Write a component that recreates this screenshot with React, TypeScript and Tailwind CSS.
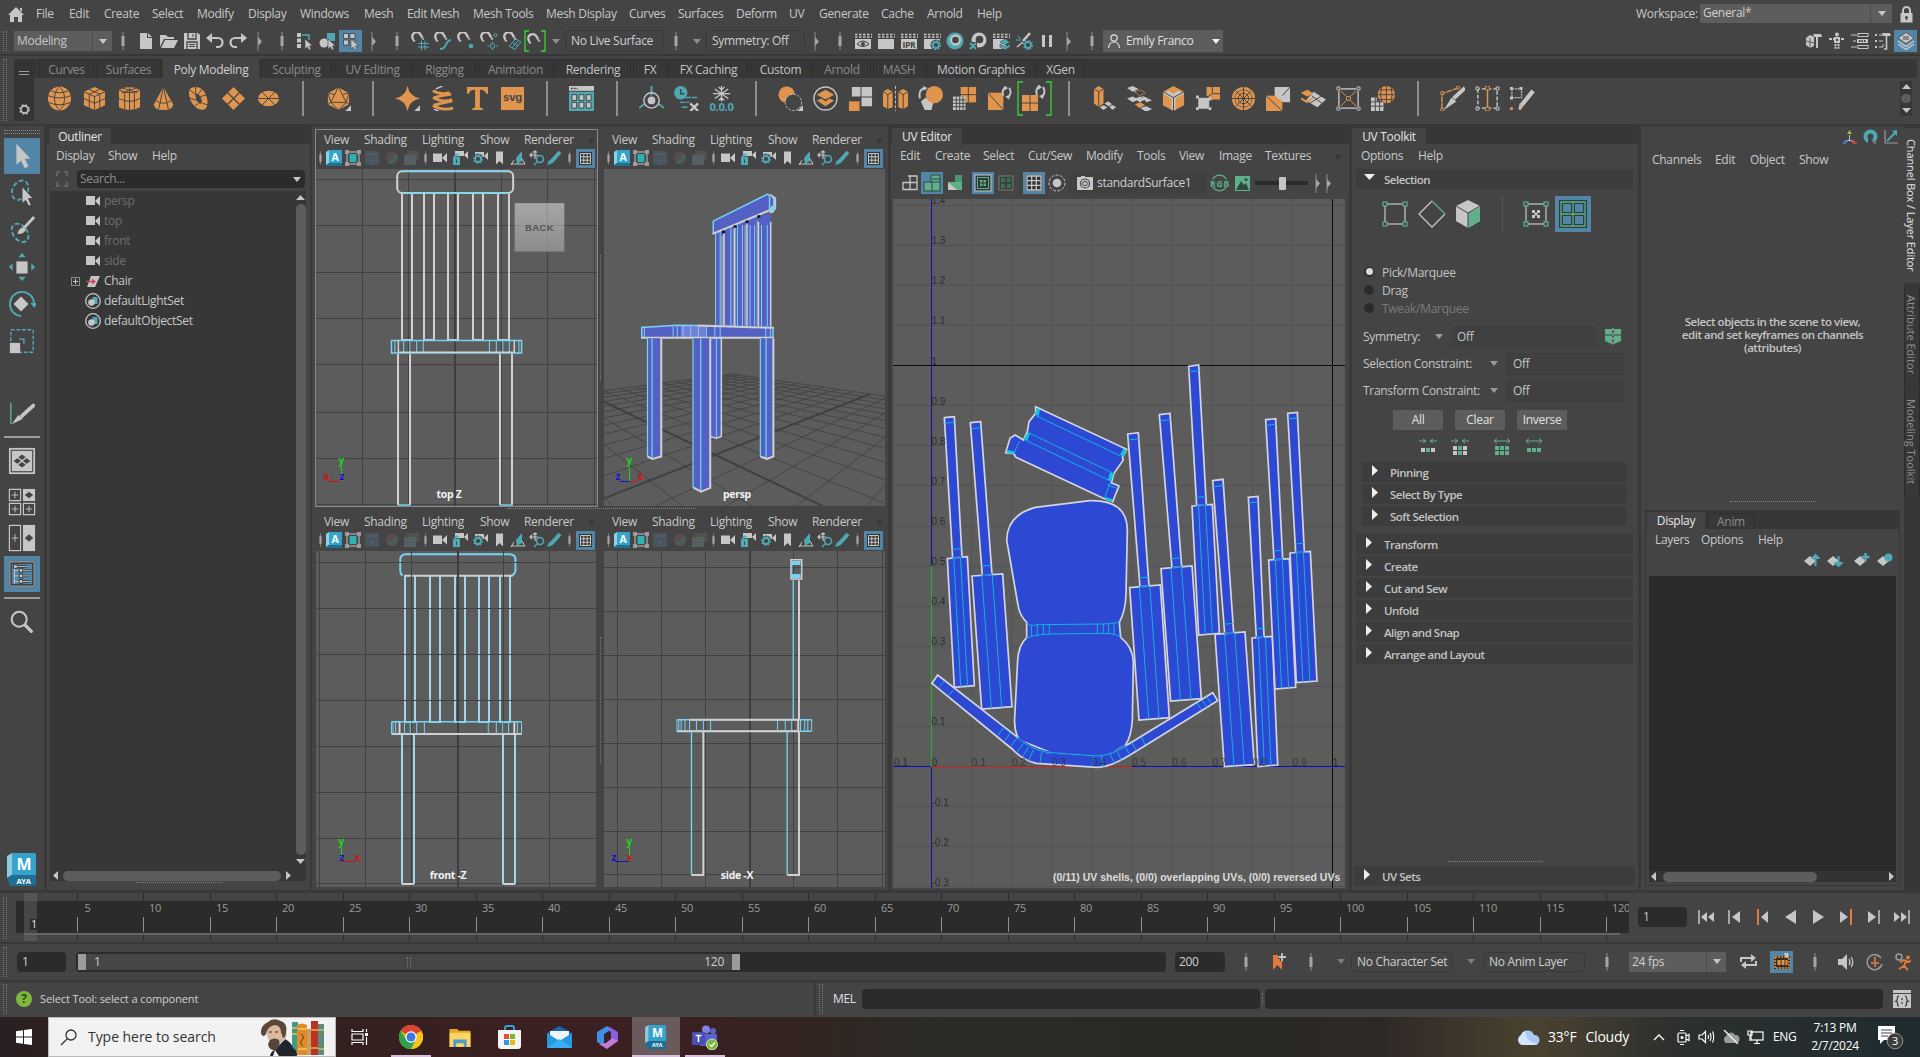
import type { ReactNode } from 'react';

const G = '#c6c6c6';
const T = '#4fa9b5';
const O = '#e0954f';
const E = '#5db08a';
const K = '#444444';

/* ---------- shared pieces ---------- */

function I({ c = 'w-[18px] h-[18px]', vb = '0 0 18 18', children }: { c?: string; vb?: string; children: ReactNode }) {
  return (
    <svg className={`${c} shrink-0 block`} viewBox={vb} fill="none" stroke="none">
      {children}
    </svg>
  );
}

function Cell({ w = 'w-[23px]', on = false, children }: { w?: string; on?: boolean; children?: ReactNode }) {
  return (
    <div className={`${w} h-[22px] shrink-0 flex items-center justify-center ${on ? 'bg-[#5285a6]' : ''}`}>{children}</div>
  );
}

const Sep = ({ w = 'w-[22px]' }: { w?: string }) => (
  <Cell w={w}>
    <I c="w-[4px] h-[18px]" vb="0 0 4 18"><path d="M2 0V18" stroke="#8d8d8d" /><path d="M2 4V14" stroke="#a6a6a6" strokeWidth="3" /></I>
  </Cell>
);
const Handle = ({ w = 'w-[22px]' }: { w?: string }) => (
  <Cell w={w}>
    <I c="w-[6px] h-[19px]" vb="0 0 6 19"><path d="M1 0V19" stroke="#8d8d8d" /><path d="M1 5L5 9.500L1 14Z" fill="#a6a6a6" /></I>
  </Cell>
);
const Down = ({ w = 'w-[18px]', f = '#9b9b9b' }: { w?: string; f?: string }) => (
  <Cell w={w}><I c="w-[8px] h-[5px]" vb="0 0 8 5"><path d="M0 0H8L4 5Z" fill={f} /></I></Cell>
);
const DotsV = ({ c }: { c: string }) => <div className={`${c} border-l border-dotted border-[#7a7a7a] shrink-0`} />;
const DotsH = ({ c }: { c: string }) => <div className={`${c} border-t border-dotted border-[#858585] shrink-0`} />;

type Item = [string, string];
function Menu({ items, c = '' }: { items: Item[]; c?: string }) {
  return (
    <div className={`flex items-center text-[#c8c8c8] ${c}`}>
      {items.map(([t, w]) => <span key={t} className={`${w} shrink-0`}>{t}</span>)}
    </div>
  );
}

/* ---------- menu bar ---------- */

const mainMenu: Item[] = [
  ['File', 'w-[33px]'], ['Edit', 'w-[35px]'], ['Create', 'w-[48px]'], ['Select', 'w-[45px]'], ['Modify', 'w-[51px]'],
  ['Display', 'w-[52px]'], ['Windows', 'w-[64px]'], ['Mesh', 'w-[43px]'], ['Edit Mesh', 'w-[66px]'], ['Mesh Tools', 'w-[73px]'],
  ['Mesh Display', 'w-[83px]'], ['Curves', 'w-[49px]'], ['Surfaces', 'w-[58px]'], ['Deform', 'w-[53px]'], ['UV', 'w-[30px]'],
  ['Generate', 'w-[62px]'], ['Cache', 'w-[46px]'], ['Arnold', 'w-[50px]'], ['Help', 'w-[40px]'],
];

function MenuBar() {
  return (
    <div className="h-[28px] flex items-center shrink-0">
      <div className="w-[36px] pl-[8px]">
        <I c="w-[16px] h-[15px]" vb="0 0 16 15"><path d="M8 0L16 8H14V15H10V10H6V15H2V8H0Z" fill={G} /><path d="M12 1h2v4l-2-2z" fill={G} /></I>
      </div>
      <Menu items={mainMenu} />
      <div className="flex-1" />
      <span className="w-[64px] text-[#c8c8c8]">Workspace:</span>
      <div className="w-[192px] h-[19px] mb-[2px] bg-[#5d5d5d] flex items-center">
        <span className="flex-1 pl-[3px] text-[#d0d0d0]">General*</span>
        <div className="w-px h-full bg-[#4c4c4c]" />
        <Down w="w-[21px]" f="#c6c6c6" />
      </div>
      <div className="w-[28px] pl-[8px]">
        <I c="w-[13px] h-[17px]" vb="0 0 13 17"><path d="M3 8V4.500a3.500 3.500 0 0 1 7 0V8" stroke={G} strokeWidth="2" /><rect x="0.500" y="7" width="12" height="9.500" fill={G} /><path d="M6.500 10v4M5 11.500h3" stroke={K} strokeWidth="1.300" /></I>
      </div>
    </div>
  );
}

/* ---------- status line ---------- */

const Magnet = () => (
  <g>
    <path d="M3.500 9.500L1.800 6.500A4.300 4.300 0 0 1 9.500 2.500L12.500 7.500" stroke={G} strokeWidth="2.400" />
    <path d="M2.800 8L5 6.800M10.500 6.500L12.700 5.300" stroke={K} strokeWidth="0.900" />
  </g>
);
const cursor = <path d="M9 7L9 17L11.300 15L13 18L15 17L13.400 14L16.500 13.700Z" fill={G} stroke={K} strokeWidth="0.600" />;
const clap = <path d="M1 2.500H18M1 5H18" stroke={G} strokeWidth="1.500" strokeDasharray="2.500 1.500" />;
const gear = (x: number, y: number, col: string) => (
  <g><circle cx={x} cy={y} r="3" stroke={col} strokeWidth="1.800" /><circle cx={x} cy={y} r="4.400" stroke={col} strokeWidth="1.300" strokeDasharray="1.700 1.700" /></g>
);

function StatusLine() {
  return (
    <div className="h-[26px] flex items-center shrink-0">
      <div className="w-[14px] flex gap-[2px] pl-[3px]"><DotsV c="h-[20px]" /><DotsV c="h-[20px]" /></div>
      <div className="w-[98px] h-[20px] bg-[#5d5d5d] flex items-center">
        <span className="flex-1 pl-[3px] text-[#c8c8c8]">Modeling</span>
        <div className="w-px h-full bg-[#4c4c4c]" />
        <Down w="w-[19px]" f="#c6c6c6" />
      </div>
      <Sep w="w-[22px]" />
      <Cell><I><path d="M3 1H10V6H15V17H3Z" fill={G} /><path d="M11 1L15 5H11Z" fill={G} /></I></Cell>
      <Cell><I><path d="M0 15V3H6L8 5H14V7H4Z" fill={G} /><path d="M5 8H18L14 16H1Z" fill={G} /></I></Cell>
      <Cell><I><path d="M1 1H15L17 3V17H1Z" fill={G} /><path d="M5 1V7H13V1M4 17V10H14V17" stroke={K} strokeWidth="1.300" /><path d="M10 2v3M6 12.500H12M6 14.500H12" stroke={K} /></I></Cell>
      <Cell><I><path d="M5 6H12A4.500 4.500 0 0 1 12 15H10" stroke={G} strokeWidth="2.200" /><path d="M0 6L6 1V11Z" fill={G} /></I></Cell>
      <Cell><I><path d="M13 6H6A4.500 4.500 0 0 0 6 15H8" stroke={G} strokeWidth="2.200" /><path d="M18 6L12 1V11Z" fill={G} /></I></Cell>
      <Handle w="w-[21px]" />
      <Sep w="w-[23px]" />
      <Cell><I><path d="M1 1h4v4H1zM1 6.500h4v4H1zM1 12h4v4H1z" fill={G} /><path d="M6 3H13V8" stroke={T} strokeWidth="1.500" />{cursor}</I></Cell>
      <Cell><I><circle cx="5" cy="11" r="4.500" fill={G} /><rect x="8" y="1" width="8" height="8" fill={T} />{cursor}</I></Cell>
      <Cell on><I><path d="M1.500 1.500h5v5h-5zM8 1.500h5v5H8zM1.500 8h5v5h-5zM8 8h5v5H8z" fill={G} stroke="#333" strokeWidth="0.700" />{cursor}</I></Cell>
      <Handle w="w-[24px]" />
      <Sep />
      <Cell><I><Magnet /><path d="M7 11.500H18M7 15H18M10.500 8.500V18M14 8.500V18" stroke={T} /></I></Cell>
      <Cell><I><Magnet /><path d="M6 17C14 17 10 9 17 8" stroke={T} strokeWidth="2" /></I></Cell>
      <Cell><I><Magnet /><circle cx="14" cy="14" r="2.300" fill={T} /></I></Cell>
      <Cell><I><Magnet /><circle cx="12.500" cy="14" r="2.300" stroke={T} /><circle cx="15.500" cy="3" r="1.500" stroke={T} /><path d="M12.500 10V11M12.500 17V18M7.500 14H9M16 14H17.500" stroke={T} /></I></Cell>
      <Cell><I><Magnet /><path d="M13 7L18 10L12 17.500L6 14ZM9.500 10.500L15 14M9 16L15 9" stroke={T} /></I></Cell>
      <Cell><I c="w-[22px] h-[22px]" vb="0 0 22 22"><path d="M5 1H1V21H5M17 1H21V21H17" stroke="#35d62c" strokeWidth="1.300" /><g transform="translate(3 4)"><Magnet /></g></I></Cell>
      <Down w="w-[19px]" f="#8d8d8d" />
      <div className="w-[99px] h-[22px] border border-[#3c3c3c] rounded-sm flex items-center pl-[5px] text-[#d0d0d0] shrink-0">No Live Surface</div>
      <Sep w="w-[24px]" />
      <Down f="#8d8d8d" />
      <div className="w-[99px] h-[22px] border border-[#3c3c3c] rounded-sm flex items-center pl-[5px] text-[#d0d0d0] shrink-0">Symmetry: Off</div>
      <Handle w="w-[24px]" />
      <Sep />
      <Cell><I>{clap}<rect x="1" y="7" width="16" height="10" fill={G} /><path d="M3 12Q9 6 15 12Q9 17 3 12Z" stroke={K} /><circle cx="9" cy="12" r="2" fill={K} /></I></Cell>
      <Cell><I>{clap}<rect x="1" y="7" width="16" height="10" fill={G} /></I></Cell>
      <Cell><I>{clap}<rect x="1" y="7" width="16" height="10" fill={G} /><text x="2.500" y="15.500" fontSize="8.500" fontWeight="bold" fill={K}>IPR</text></I></Cell>
      <Cell><I>{clap}<path d="M1 7H17V9L9 17H1Z" fill={G} /><circle cx="13" cy="13" r="5.500" fill={K} />{gear(13, 13, T)}</I></Cell>
      <Cell><I><circle cx="9" cy="9" r="8.500" fill={T} /><circle cx="9.500" cy="8" r="5.500" fill={G} /><circle cx="9.500" cy="8" r="3.300" fill={K} /></I></Cell>
      <Cell><I><circle cx="10" cy="8" r="7.500" fill={G} /><circle cx="10.500" cy="7.500" r="3.800" fill={K} /><path d="M0 10H8V18H0Z" fill={K} /><path d="M1 11L7 17M7 11L1 17" stroke={T} strokeWidth="2" /></I></Cell>
      <Cell><I>{clap}<rect x="1" y="7" width="13" height="10" fill={G} /><path d="M13 7L18 10L13 13L8 10ZM8 12L13 15L18 12V15L13 18L8 15Z" fill={T} stroke={K} strokeWidth="0.600" /></I></Cell>
      <Cell><I><path d="M1 8H6M3 4L6 7" stroke={T} /><path d="M8 9L15 1" stroke={G} strokeWidth="2.500" /><path d="M2 15L8 10" stroke={G} strokeWidth="1.500" />{gear(13, 13, T)}</I></Cell>
      <Cell><I><path d="M5.500 3V15M12.500 3V15" stroke={G} strokeWidth="3" /></I></Cell>
      <Handle />
      <Sep w="w-[23px]" />
      <div className="w-[120px] h-[22px] bg-[#5d5d5d] flex items-center shrink-0">
        <I c="w-[14px] h-[15px] ml-[4px]" vb="0 0 14 15"><circle cx="7" cy="4" r="3.200" stroke="#e0e0e0" strokeWidth="1.200" /><path d="M1.500 14C2 9 5 8 7 8S12 9 12.500 14" stroke="#e0e0e0" strokeWidth="1.200" /></I>
        <span className="flex-1 pl-[5px] text-[#e0e0e0]">Emily Franco</span>
        <Down w="w-[15px]" f="#f0f0f0" />
      </div>
      <div className="flex-1" />
      <Cell><I><path d="M1 6L5 3L9 5V14L5 16L1 13Z" fill={G} /><path d="M1 9L9 11M5 6V16" stroke={K} strokeWidth="0.800" /><path d="M8 2H16L17 5H9Z" fill={G} /><path d="M12 4V16" stroke={G} strokeWidth="2" /></I></Cell>
      <Cell><I><circle cx="9" cy="2.500" r="2" fill={G} /><path d="M1 7H17" stroke={G} strokeWidth="2" strokeDasharray="3 1" /><rect x="6" y="5" width="6" height="6" fill={G} /><rect x="8" y="7" width="2" height="2" fill={K} /><path d="M7.500 12V17M10.500 12V17" stroke={G} strokeWidth="2" strokeDasharray="2 .8" /></I></Cell>
      <Cell><I><path d="M0 3H6M2 9H5M0 15H6" stroke={G} /><rect x="7" y="1.500" width="10" height="3" stroke={G} /><rect x="6" y="7" width="11" height="4" fill={G} /><path d="M8 9H15" stroke={K} strokeDasharray="1.500 1" strokeWidth="2" /><rect x="7" y="13.500" width="10" height="3" stroke={G} /></I></Cell>
      <Cell><I><path d="M1 3H3M1 9H3M1 15H3" stroke={G} strokeWidth="2" /><path d="M5 3H9M5 9H9M5 15H9V12" stroke={G} /><path d="M8 1H16L17 4H9Z" fill={G} /><path d="M12.500 4V17H10" stroke={G} strokeWidth="1.600" /></I></Cell>
      <Cell on><I><path d="M9 0.500L17 6L9 11.500L1 6Z" fill={G} stroke="#333" strokeWidth="0.600" /><path d="M1 9L9 14.500L17 9M1 12L9 17.500L17 12" stroke={G} strokeWidth="1.500" /><path d="M6 5H12M6 7H12" stroke="#444" /></I></Cell>
      <div className="w-[3px]" />
    </div>
  );
}

/* ---------- shelf ---------- */

const shelfTabs: [string, string, 0 | 1 | 2][] = [
  ['Curves', 'w-[57px]', 0], ['Surfaces', 'w-[67px]', 0], ['Poly Modeling', 'w-[98px]', 2], ['Sculpting', 'w-[73px]', 0],
  ['UV Editing', 'w-[79px]', 0], ['Rigging', 'w-[65px]', 0], ['Animation', 'w-[77px]', 0], ['Rendering', 'w-[78px]', 1],
  ['FX', 'w-[36px]', 1], ['FX Caching', 'w-[81px]', 1], ['Custom', 'w-[63px]', 1], ['Arnold', 'w-[60px]', 0],
  ['MASH', 'w-[54px]', 0], ['Motion Graphics', 'w-[110px]', 1], ['XGen', 'w-[49px]', 1],
];
const tri = <path d="M26 20V26H20Z" fill={G} />;
const spin = (x: number) => <g transform={`translate(${x} 0)`}><path d="M5 10A5 6 0 0 1 8 1M11 2A5 6 0 0 1 9 12" stroke={G} strokeWidth="2" /><path d="M6 0L10 2L6 5ZM12 9L7 11L11 14Z" fill={G} /></g>;

const shelf: ReactNode[] = [
  <><ellipse cx="13" cy="13" rx="12" ry="12.500" fill={O} /><path d="M1 10Q13 15 25 10M1 17Q13 22 25 17M13 1C6 6 6 20 13 25M13 1C20 6 20 20 13 25M4 5Q13 9 22 5" stroke={K} /></>,
  <><path d="M13 1L24 6V20L13 25L2 20V6Z" fill={O} /><path d="M2 6L13 11L24 6M13 11V25M2 13L13 18L24 13M7.500 8.500V22.500M18.500 8.500V22.500M7.500 3.500L18.500 8.500M18.500 3.500L7.500 8.500" stroke={K} /></>,
  <><path d="M2 4Q13 -2 24 4V22Q13 28 2 22Z" fill={O} /><path d="M2 4Q13 10 24 4M2 13Q13 19 24 13M13 1V25M5 2L21 7M21 2L5 7M8 7V24M18 7V24" stroke={K} /></>,
  <><path d="M13 1L23 19Q23 25 13 25Q3 25 3 19Z" fill={O} /><path d="M13 1L8 24M13 1L18 24M5 15Q13 21 21 15" stroke={K} /></>,
  <><path fillRule="evenodd" d="M10 1C20 0 26 18 20 24C10 28 0 12 4 3Q6 1 10 1ZM10 8C9 13 13 20 16 18C18 15 14 7 10 8Z" fill={O} /><path d="M10 1L10 8M4 4L10 9M3 12L11 15M9 21L13 18M24 20L17 18M22 9L15 11M17 3L13 8" stroke={K} /></>,
  <><path d="M13 1L25 13L13 25L1 13Z" fill={O} /><path d="M7 7L19 19M19 7L7 19" stroke={K} strokeWidth="1.300" /></>,
  <><ellipse cx="13" cy="13" rx="11" ry="8" fill={O} /><path d="M1 13H25M6 6L20 20M20 6L6 20" stroke={K} /></>,
  'sep',
  <><path d="M13 1L24 7V19L13 25L2 19V7Z" fill={O} /><path d="M13 1L5 17H21ZM2 7L13 1L24 7M5 17L13 25L21 17M2 7L5 17L2 19M24 7L21 17L24 19M9 9L2 7M17 9L24 7" stroke={K} />{tri}</>,
  'sep',
  <><path d="M13 0Q15 11 26 13Q15 15 13 26Q11 15 0 13Q11 11 13 0Z" fill={O} />{tri}</>,
  <><path d="M3 5Q12 10 20 6.500M4 12Q12 10 22 8.500M3 12Q14 18 23 14M4 20Q12 18 23 15.500M3 20Q12 26 24 23" stroke={O} strokeWidth="3" /><path d="M6 3L13 0M4 24L9 26" stroke={G} strokeWidth="1.500" /></>,
  <path d="M2 1H24V8H22Q21 4 15.500 4V22L19 24V25H7V24L10.500 22V4Q5 4 4 8H2Z" fill={O} />,
  <><rect x="1" y="1" width="24" height="24" fill={O} /><text x="13" y="16" textAnchor="middle" textLength="20" fontSize="12" fontWeight="bold" fontFamily="Liberation Sans, sans-serif" fill={K}>svg</text></>,
  'sep',
  <><rect x="0" y="0" width="26" height="5" fill={G} /><path d="M2 2.500H9" stroke={K} strokeDasharray="2 1" strokeWidth="1.500" /><rect x="0" y="6" width="26" height="20" fill={T} /><path d="M3 9h5v6H3zM10.500 9h5v6h-5zM18 9h5v6h-5zM3 17h5v6H3zM10.500 17h5v6h-5zM18 17h5v6h-5z" fill={G} stroke={K} /></>,
  'sep',
  <><path d="M13 0V10M5 19L0 23M21 19L26 23" stroke={T} strokeWidth="2" /><circle cx="13" cy="15" r="8" stroke={G} strokeWidth="1.500" /><circle cx="13" cy="15" r="4" fill={G} /></>,
  <><circle cx="7" cy="7" r="7" fill={T} /><path d="M7 3V8H11" stroke={K} strokeWidth="1.500" /><path d="M12 12H24M6 17H16M8 22H14" stroke={T} strokeWidth="1.500" strokeDasharray="6 1" /><path d="M17 18L25 26M25 18L17 26" stroke={G} strokeWidth="2.500" /></>,
  <><path d="M13 0V16M6 3L20 13M20 3L6 13M4 8H22M10 1L13 4L16 1M10 15L13 12L16 15" stroke={G} strokeWidth="1.300" /><text x="13" y="25.500" textAnchor="middle" textLength="25" lengthAdjust="spacingAndGlyphs" fontSize="11.500" fontWeight="bold" fill={T}>0,0,0</text></>,
  'sep',
  <><circle cx="9" cy="9" r="8.500" fill={O} /><circle cx="16" cy="17" r="8.500" fill={K} stroke={G} strokeDasharray="2.500 1.500" />{tri}</>,
  <><circle cx="13" cy="13" r="12" stroke={G} strokeWidth="1.500" /><path d="M13 4L22 9L13 14L4 9ZM4 15L9 13L13 16L17 13L22 15L13 21Z" fill={O} /></>,
  <><path d="M4 1h9v10H4zM14 1h11v10H14zM14 12h11v9H14z" fill={G} /><rect x="1" y="16" width="11" height="10" fill={O} /></>,
  <><path d="M0 6L5 3L10 6V22L5 24L0 21ZM26 6L21 3L16 6V22L21 24L26 21Z" fill={O} /><path d="M13 0V26" stroke={G} strokeDasharray="3 2" /><path d="M5 9V24M21 9V24M0 6L5 9L10 6M16 6L21 9L26 6" stroke={K} /></>,
  <><path d="M3 16L8 12L16 17L14 25H7Z" fill={G} /><circle cx="17" cy="9" r="9" fill={O} /><path d="M2 13Q0 4 7 2" stroke={G} strokeWidth="2" /><path d="M5 0L10 2L6 5Z" fill={G} /></>,
  <><path d="M9 1H25V17H9Z" fill={O} /><path d="M17 1V17M9 9H25" stroke={K} /><path d="M1 11H14V25H1Z" fill={G} /><path d="M4.500 11V25M8 11V25M11.500 11V25M1 14.500H14M1 18H14M1 21.500H14" stroke={K} /></>,
  <><rect x="1" y="7" width="16" height="18" fill={O} /><path d="M1 7L17 25" stroke={K} />{spin(12)}</>,
  'bracket',
  'sep',
  <><path d="M2 3L7 0L12 3V18L7 22L2 18Z" fill={O} /><path d="M2 3L7 6L12 3M7 6V22" stroke={K} /><path d="M13 18L17 16L21 19L17 21ZM18 21L22 20L25 22L21 25ZM8 22L12 20L16 22L12 25Z" fill={G} /></>,
  <><path d="M0 2L6 0L12 3L6 6ZM8 13L14 11L19 14L13 17ZM15 10L20 12L26 15L20 17ZM14 23L20 21L26 24L20 27ZM0 13L6 11L12 14L6 17Z" fill={G} /><path d="M8 19L14 17L19 20L13 23Z" fill={O} /><path d="M8 6L14 4L19 7L13 10Z" stroke={O} strokeDasharray="2 1" /></>,
  <><path d="M13 0L24 6V20L13 26L2 20V6Z" fill={O} /><path d="M2 8L8 5L13 8L18 5L24 8L15 13V25H11V13Z" fill={G} /><path d="M2 6L13 12L24 6M13 12V26" stroke={K} /></>,
  <><path d="M11 1H25V14H15L11 10Z" fill={O} /><path d="M17 1V8L11 12M17 8H25" stroke={K} /><path d="M2 12H14V24H2Z" fill={G} stroke={K} strokeDasharray="2 1" /><path d="M0 10h3v3H0zM13 22h3v3h-3zM0 22h3v3H0zM13 12h3v3h-3z" fill={G} /></>,
  <><circle cx="13" cy="13" r="12" fill={O} /><circle cx="13" cy="13" r="5.500" stroke={K} /><circle cx="13" cy="13" r="9" stroke={K} strokeWidth="0.700" /><path d="M13 1V25M1 13H25M5 5L21 21M21 5L5 21" stroke={K} /></>,
  <><rect x="0" y="10" width="17" height="16" fill={O} /><path d="M0 10L17 26" stroke={K} /><path d="M9 1H25V17H18L9 10Z" fill={G} /><path d="M17 10L25 1" stroke={K} /></>,
  <><path d="M13 6L26 14L17 22L5 15Z" fill={G} /><path d="M0 7L7 4L13 8L6 11ZM0 12L6 15L13 11L13 13L6 18L0 14Z" fill={O} /><path d="M9 18L22 10M11 10L22 18" stroke={K} /></>,
  <><rect x="3" y="3" width="20" height="20" stroke={G} strokeWidth="1.400" /><path d="M3 3L23 23M23 3L3 23" stroke={O} /><path d="M0 0h5v5H0zM21 0h5v5h-5zM0 21h5v5H0zM21 21h5v5h-5zM10 10h6v6h-6z" fill={K} /><path d="M1 1h3v3H1zM22 1h3v3h-3zM1 22h3v3H1zM22 22h3v3h-3z" stroke={G} /><path d="M11 11h4v4h-4z" stroke={O} /></>,
  <><circle cx="17" cy="9" r="9" fill={O} /><path d="M17 0V18M8 9H26M10 4H24M10 14H24M12 1Q10 9 12 17M22 1Q24 9 22 17" stroke={K} /><path d="M1 12H7V16H14V26H1Z" fill={G} /><path d="M1 16.500H14M1 21H14M5.500 12V26M10 16V26" stroke={K} /></>,
  'sep',
  <><path d="M2 24V8L19 2" stroke={O} strokeWidth="1.500" strokeDasharray="6 1" /><path d="M1 6h3v3H1zM17 0h3v3h-3zM1 23h3v3H1z" stroke={O} fill={K} /><path d="M4 25L12 12L17 16Z" fill={G} /><path d="M14 13L26 2" stroke={G} strokeWidth="4" /></>,
  <><path d="M3 3V23H23V3Z" stroke={G} strokeWidth="1.500" strokeDasharray="4 2" /><path d="M13 2V24" stroke={O} strokeWidth="1.500" /><path d="M11 0h4v4h-4zM11 22h4v4h-4z" fill={K} stroke={O} /><path d="M1 1h3v3H1zM22 1h3v3h-3zM1 22h3v3H1zM22 22h3v3h-3z" fill={K} stroke={G} /></>,
  <><path d="M2 3H12V12H2Z" stroke={G} strokeWidth="1.300" strokeDasharray="2 1" /><path d="M0 1h3v3H0zM10 1h3v3h-3zM0 11h3v3H0z" fill={G} /><path d="M0 22h3v3H0zM9 22h3v3H9z" fill={O} /><path d="M12 20L24 5" stroke={G} strokeWidth="4.500" /><path d="M9 24L10 18L14 22Z" fill={G} /></>,
];

function Shelf() {
  return (
    <div className="h-[68px] flex shrink-0 pt-[3px] border-t-2 border-[#383838]">
      <div className="w-[14px] flex gap-[2px] pl-[3px]"><DotsV c="h-[62px]" /><DotsV c="h-[62px]" /></div>
      <div className="w-[20px] h-[62px] bg-[#343434] flex flex-col items-center pt-[11px] gap-[29px]">
        <div className="w-[10px] h-[4px] border-y border-[#9b9b9b] mt-px" />
        <I c="w-[11px] h-[11px]" vb="0 0 11 11"><circle cx="5.500" cy="5.500" r="3.600" stroke={G} strokeWidth="1.600" /><circle cx="5.500" cy="5.500" r="4.800" stroke={G} strokeWidth="1.200" strokeDasharray="1.900 1.900" /></I>
      </div>
      <div className="flex-1 flex flex-col">
        <div className="h-[19px] bg-[#373737] flex pl-[5px] mr-[3px]">
          {shelfTabs.map(([t, w, s]) => (
            <div key={t} className={`${w} pr-[2px]`}>
              <div className={`h-full flex items-center justify-center pt-[3px] pb-px ${s === 2 ? 'bg-[#444444] text-[#d0d0d0]' : s === 1 ? 'border-x border-t border-[#2f2f2f] text-[#c4c4c4]' : 'border-x border-t border-[#2f2f2f] text-[#8b8b8b]'}`}>{t}</div>
            </div>
          ))}
        </div>
        <div className="h-[41px] flex items-center pl-[8px]">
          {shelf.map((s, i) => (
            <div key={i} className="w-[34.83px] shrink-0 flex justify-center">
              {s === 'sep' ? <div className="w-[2px] h-[35px] bg-[#8f8f8f]" /> : s === 'bracket' ? (
                <I c="w-[35px] h-[35px]" vb="0 0 35 35"><path d="M6 1H1V34H6M29 1H34V34H29" stroke="#35d62c" strokeWidth="1.300" /><path d="M5 14H21V30H5Z" fill={O} /><path d="M13 14V30M5 22H21" stroke={K} /><g transform="translate(0 4)">{spin(15)}</g></I>
              ) : <I c="w-[25px] h-[25px]" vb="0 0 26 26">{s}</I>}
            </div>
          ))}
          <div className="flex-1" />
          <div className="w-[12px] h-[35px] bg-[#373737] mr-[8px] flex flex-col items-center justify-between py-[3px]">
            <I c="w-[9px] h-[5px]" vb="0 0 9 5"><path d="M0 5L4.500 0L9 5Z" fill={G} /></I>
            <div className="w-[10px] h-[9px] rounded-full bg-[#5d5d5d]" />
            <I c="w-[9px] h-[5px]" vb="0 0 9 5"><path d="M0 0L4.500 5L9 0Z" fill={G} /></I>
          </div>
        </div>
      </div>
    </div>
  );
}

/* ---------- tool box ---------- */

const arrowTool = <path d="M9 2V24L14 20L18 28L22 26L18 18H24Z" fill={G} />;
function Tool({ h = 'h-[36px]', on = false, children }: { h?: string; on?: boolean; children?: ReactNode }) {
  return <div className={`${h} w-[36px] shrink-0 flex items-center justify-center ${on ? 'bg-[#5285a6]' : ''}`}>{children && <I c="w-[28px] h-[28px]" vb="0 0 30 30">{children}</I>}</div>;
}
function ToolBox() {
  return (
    <div className="w-[44px] shrink-0 flex flex-col pl-[4px]">
      <div className="h-[12px] pt-[4px] flex flex-col gap-[2px]"><DotsH c="w-[36px]" /><DotsH c="w-[36px]" /></div>
      <Tool on>{arrowTool}</Tool>
      <Tool h="h-[38px]"><ellipse cx="13" cy="12" rx="8" ry="11" transform="rotate(30 13 12)" stroke={T} strokeWidth="2" strokeDasharray="5 2.500" /><path d="M15 8V26L19 23L22 29L25 28L22 21H27Z" fill={G} stroke={K} /></Tool>
      <Tool h="h-[36px]"><ellipse cx="13" cy="18" rx="7.500" ry="11" transform="rotate(-38 13 18)" stroke={T} strokeWidth="2" strokeDasharray="5 2.500" /><path d="M10 19Q12 12 17 12L19 15Q16 20 10 19Z" fill={G} /><path d="M17 13L28 1" stroke={G} strokeWidth="3" /></Tool>
      <Tool h="h-[37px]"><rect x="9" y="9" width="12" height="13" fill={G} /><path d="M15 0L19 4.500H11ZM15 30L19 25.500H11ZM1 15L5 11V19ZM29 15L25 11V19Z" fill={T} /></Tool>
      <Tool h="h-[37px]"><path d="M14 28A13 13 0 1 1 28 14" stroke={T} strokeWidth="2" /><path d="M24 14H32L28 19Z" fill={T} /><path d="M14 7L22 15L14 23L6 15Z" fill={G} /></Tool>
      <Tool h="h-[37px]"><rect x="3" y="3" width="24" height="24" stroke={T} strokeWidth="1.500" strokeDasharray="4 2" /><rect x="2" y="17" width="11" height="11" fill={G} /><path d="M12 13H17V18" stroke={T} strokeWidth="1.500" /></Tool>
      <div className="h-[35px]" />
      <Tool h="h-[40px]"><path d="M3 3V26" stroke={E} strokeWidth="1.500" /><path d="M4 26L11 16L16 20Z" fill={G} /><path d="M15 17L27 6" stroke={G} strokeWidth="4" strokeLinecap="round" /></Tool>
      <div className="h-[2px] w-[36px] mt-[2px] bg-[#9b9b9b]" />
      <Tool h="h-[46px]"><rect x="1" y="1" width="28" height="28" fill={G} /><rect x="3.500" y="3.500" width="23" height="23" stroke={K} strokeWidth="1.200" /><path d="M15 8L19 11L15 14L11 11ZM10 12L14 15L10 18L6 15ZM20 12L24 15L20 18L16 15ZM15 16L19 19L15 22L11 19Z" fill={K} /></Tool>
      <Tool h="h-[36px]"><path d="M1.500 1.500h12v12h-12zM1.500 16.500h12v12h-12zM16.500 16.500h12v12h-12z" stroke={G} strokeWidth="1.300" /><path d="M16 1h13v13H16z" fill={G} /><path d="M22.500 4L27 7.500L22.500 11L18 7.500Z" fill={K} /><path d="M7.500 4v7M4 7.500h7M7.500 19v7M4 22.500h7M22.500 19v7M19 22.500h7" stroke={G} /></Tool>
      <Tool h="h-[36px]"><rect x="1.500" y="1.500" width="12" height="27" stroke={G} strokeWidth="1.300" /><path d="M16 1h13v28H16z" fill={G} /><path d="M22.500 11L27 15L22.500 19L18 15Z" fill={K} /><path d="M7.500 11v8M4 15h7" stroke={G} /></Tool>
      <Tool h="h-[36px]" on><rect x="1" y="1" width="28" height="28" fill="#333" /><rect x="2" y="2" width="26" height="26" stroke={G} /><rect x="4" y="4" width="22" height="22" fill="#5285a6" /><path d="M7 8V25M7 11H12M7 17H12M7 23H12" stroke={G} /><path d="M6 5h4v4H6zM12 9h4v4h-4zM12 15h4v4h-4zM12 21h4v4h-4z" fill={G} stroke="#333" /><path d="M10 7H20M16 11H25M16 17H22M16 23H24" stroke="#333" strokeWidth="2.500" /><path d="M10 7H20M16 11H25M16 17H22M16 23H24" stroke={G} /></Tool>
      <div className="h-[2px] w-[36px] mt-[5px] bg-[#9b9b9b]" />
      <Tool h="h-[46px]"><circle cx="12" cy="12" r="8" stroke={G} strokeWidth="2.200" /><path d="M18 18L25 25" stroke={G} strokeWidth="3.500" strokeLinecap="round" /></Tool>
      <div className="flex-1" />
      <div className="h-[37px] pl-[3px]"><MayaLogo c="w-[30px] h-[33px]" /></div>
    </div>
  );
}
function MayaLogo({ c }: { c: string }) {
  return (
    <I c={c} vb="0 0 30 33">
      <path d="M0 3L5 0V22L0 25Z" fill="#8ccbe2" /><path d="M5 0H27Q29 0 29 2V22H5Z" fill="#35a3cb" /><path d="M0 25L5 22H29V31Q29 33 27 33H3Z" fill="#1e6f93" />
      <text x="17" y="17" textAnchor="middle" fontSize="16" fontWeight="bold" fill="#fff">M</text>
      <text x="16.500" y="30.500" textAnchor="middle" fontSize="7.500" fontWeight="bold" fill="#fff">AYA</text>
    </I>
  );
}

/* ---------- outliner ---------- */

const cameraIcon = <I c="w-[14px] h-[10px]" vb="0 0 14 10"><path d="M0 0H9V9H0ZM14 0V10L9 5Z" fill={G} /></I>;
const setIcon = <I c="w-[16px] h-[16px]" vb="0 0 16 16"><circle cx="8" cy="8" r="7.300" stroke={G} strokeWidth="1.300" /><rect x="7.500" y="4" width="5" height="7" fill={T} /><circle cx="6.500" cy="9.500" r="3.300" fill={G} /></I>;

function Outliner() {
  return (
    <div className="w-[263px] shrink-0 flex flex-col">
      <div className="h-[18px] bg-[#373737] pl-[2px] pt-[2px]">
        <div className="w-[62px] h-full bg-[#444444] flex items-center justify-center pt-[2px] text-[#e6e6e6]">Outliner</div>
      </div>
      <Menu c="h-[22px] pl-[9px] pt-px" items={[['Display', 'w-[52px]'], ['Show', 'w-[44px]'], ['Help', 'w-[40px]']]} />
      <div className="h-[25px] flex items-center pl-[8px] pt-px">
        <I c="w-[14px] h-[16px]" vb="0 0 14 16"><path d="M2 1H5M2 1V5M9 1H12V5M2 11V15H5M12 11V15H9" stroke="#6c6c6c" strokeWidth="1.500" /></I>
        <div className="ml-[8px] w-[228px] h-[18px] bg-[#2b2b2b] rounded-sm flex items-center">
          <span className="flex-1 pl-[3px] text-[#8f8f8f]">Search...</span>
          <Down w="w-[17px]" f={G} />
        </div>
      </div>
      <div className="flex-1 flex flex-col ml-[3px] mr-[4px] bg-[#373737]">
        <div className="flex-1 flex">
          <div className="flex-1">
            {['persp', 'top', 'front', 'side'].map((t) => (
              <div key={t} className="h-[20px] flex items-center pl-[36px] gap-[4px] text-[#6e6e6e]">{cameraIcon}<span>{t}</span></div>
            ))}
            <div className="h-[20px] flex items-center pl-[21px] text-[#c8c8c8]">
              <I c="w-[9px] h-[9px]" vb="0 0 9 9"><rect x="0.500" y="0.500" width="8" height="8" stroke="#8f8f8f" /><path d="M2 4.500H7M4.500 2V7" stroke={G} /></I>
              <I c="w-[16px] h-[13px] ml-[5px]" vb="0 0 16 13"><path d="M6 1H15L10 12H2Z" fill={G} /><path d="M1 6.500H9" stroke="#d04552" strokeWidth="1.500" /><path d="M7 3.500L11 6.500L7 9.500Z" fill="#d04552" /></I>
              <span className="ml-[3px]">Chair</span>
            </div>
            {['defaultLightSet', 'defaultObjectSet'].map((t) => (
              <div key={t} className="h-[20px] flex items-center pl-[35px] gap-[3px] text-[#c8c8c8]">{setIcon}<span>{t}</span></div>
            ))}
          </div>
          <div className="w-[11px] flex flex-col items-center pt-[4px] gap-[4px]">
            <I c="w-[9px] h-[5px]" vb="0 0 9 5"><path d="M0 5L4.500 0L9 5Z" fill={G} /></I>
            <div className="flex-1 w-[10px] rounded-full bg-[#5d5d5d]" />
            <I c="w-[9px] h-[5px] mb-[6px]" vb="0 0 9 5"><path d="M0 0L4.500 5L9 0Z" fill={G} /></I>
          </div>
        </div>
        <div className="h-[11px] flex items-center pl-[3px] gap-[5px]">
          <I c="w-[5px] h-[9px]" vb="0 0 5 9"><path d="M5 0V9L0 4.500Z" fill={G} /></I>
          <div className="w-[218px] h-[10px] rounded-full bg-[#5d5d5d]" />
          <I c="w-[5px] h-[9px]" vb="0 0 5 9"><path d="M0 0V9L5 4.500Z" fill={G} /></I>
        </div>
      </div>
      <div className="h-[9px] flex justify-center pt-px"><DotsH c="w-[86px]" /></div>
    </div>
  );
}

/* ---------- viewports ---------- */

const W = '#d0d0d0';
const C = '#76d3f5';

const panelIcons: [ReactNode, string][] = [
  [<><path d="M0 2L3 0V13L0 15Z" fill="#8fd2e6" /><path d="M3 0H16V14H3Z" fill="#35a3cb" /><path d="M0 16L3 13H16V16Z" fill="#1e6f93" /><text x="5.500" y="11" fontSize="10.500" fontWeight="bold" fill="#fff">A</text></>, 'w-[19px]'],
  [<><rect x="2" y="2" width="12" height="12" stroke={G} /><rect x="4.500" y="4" width="7" height="8" fill="#2fb1b3" /><path d="M0 0h4v4H0zM12 0h4v4h-4zM0 12h4v4H0zM12 12h4v4h-4z" fill="#9b9b9b" /></>, 'w-[19px]'],
  [<><rect x="1" y="1" width="14" height="14" fill="#4a545e" /><path d="M3 4H13M8 8V13" stroke="#566470" /></>, 'w-[20px]'],
  [<><circle cx="8" cy="8" r="6.500" fill="#5a4a54" /><path d="M3.500 12.500L12.500 3.500A6.500 6.500 0 0 1 3.500 12.500" fill="#4a5f58" /></>, 'w-[19px]'],
  [<><rect x="4" y="1" width="12" height="9" fill="#53534b" /><rect x="1" y="5" width="12" height="10" fill="#566062" /></>, 'w-[19px]'],
  ['sep', 'w-[10px]'],
  [<><path d="M1 3.500H10V12H1ZM15 3V12.500L10 8Z" fill={G} /></>, 'w-[20px]'],
  [<><path d="M3 1H12V6H3ZM16 1V9L12 5Z" fill={G} /><rect x="1" y="7" width="7" height="8" fill={T} /><path d="M3 8V5.500A1.700 1.700 0 0 1 6.300 5.500V8" stroke={T} strokeWidth="1.500" /><path d="M4.500 9.500V13" stroke={K} /></>, 'w-[20px]'],
  [<><path d="M3 2H12V7H3ZM16 2V10L12 6Z" fill={G} /><circle cx="6" cy="9" r="5.500" fill={K} />{gear(6, 9, T)}</>, 'w-[19px]'],
  [<path d="M5 1.500H12V14.500L8.500 11L5 14.500Z" fill={G} />, 'w-[19px]'],
  [<><path d="M6 8L12 1V11L7 14Z" fill={T} /><path d="M1 14H15L12 9M4 10L1 15" stroke={G} /></>, 'w-[19px]'],
  [<><path d="M1 5H9M6 1V9M3 3L1 5L3 7M4 2.500L6 1L8 2.500" stroke={G} strokeWidth="1.200" /><circle cx="11" cy="9" r="3.500" stroke={T} strokeWidth="1.500" /><path d="M8 12L5 15" stroke={T} strokeWidth="1.500" /></>, 'w-[19px]'],
  [<><path d="M4 12L13 2" stroke={T} strokeWidth="4" /><path d="M0 15L2 10L6 13Z" fill={T} /></>, 'w-[18px]'],
  ['sep', 'w-[11px]'],
];

function Panel({ active = false, top, children }: { active?: boolean; top: string; children: ReactNode }) {
  return (
    <div className={`w-[283px] shrink-0 flex flex-col border ${active ? 'border-[#8a8a8a]' : 'border-transparent'}`}>
      <div className={`flex flex-col shrink-0 ${top}`}>
        <div className="h-[18px] flex items-center pl-[8px] pt-[2px]">
          <Menu items={[['View', 'w-[40px]'], ['Shading', 'w-[58px]'], ['Lighting', 'w-[58px]'], ['Show', 'w-[44px]'], ['Renderer', 'w-[64px]']]} />
          <span className="text-[#2c2c2c]">»</span>
        </div>
        <div className="flex-1 flex items-center -mt-px">
          <div className="w-[8px] flex justify-center"><I c="w-[3px] h-[16px]" vb="0 0 4 18"><path d="M2 0V18" stroke="#8d8d8d" /><path d="M2 4V14" stroke="#a6a6a6" strokeWidth="3" /></I></div>
          {panelIcons.map(([n, w], i) => (
            <div key={i} className={`${w} flex justify-center shrink-0`}>
              {n === 'sep' ? <I c="w-[3px] h-[16px]" vb="0 0 4 18"><path d="M2 0V18" stroke="#8d8d8d" /><path d="M2 4V14" stroke="#a6a6a6" strokeWidth="3" /></I> : <I c="w-[16px] h-[16px]" vb="0 0 16 16">{n}</I>}
            </div>
          ))}
          <div className="w-[19px] h-[19px] ml-px bg-[#5285a6] flex items-center justify-center shrink-0">
            <I c="w-[13px] h-[13px]" vb="0 0 13 13"><rect width="13" height="13" fill="#333" /><path d="M1.500 1.500H11.500V11.500H1.500ZM1.500 4.800H11.500M1.500 8.200H11.500M4.800 1.500V11.500M8.200 1.500V11.500" stroke={G} /></I>
          </div>
        </div>
      </div>
      <div className="flex-1 bg-[#5c5c5c] overflow-hidden">{children}</div>
    </div>
  );
}

const lines = (xs: number[], y1: number, y2: number) => xs.map((x) => `M${x} ${y1}V${y2}`).join('');
const pairs = (ps: [number, number][], y1: number, y2: number) => ps.map(([a, b]) => `M${a} ${y1}V${y2}H${b}V${y1}`).join('');

function Stage({ vb, oy, children, over }: { vb: string; oy: number; children: ReactNode; over: ReactNode }) {
  return (
    <svg className="w-[281px] h-full block" viewBox={vb} preserveAspectRatio="none" fill="none">
      <g transform={`matrix(0.38268 0 0 0.33333 300 ${oy})`} className="[&_*]:[vector-effect:non-scaling-stroke]">{children}</g>
      {over}
    </svg>
  );
}
function Grid({ xs, ys, thick, x0, x1, y0 = 130, y1 = 1150 }: { xs: number[]; ys: number[]; thick: number; x0: number; x1: number; y0?: number; y1?: number }) {
  return (
    <g shapeRendering="crispEdges">
      <path d={xs.map((x) => `M${x} ${y0}V${y1}`).join('') + ys.map((y) => `M${x0} ${y}H${x1}`).join('')} stroke="#424242" />
      <path d={`M${thick} ${y0}V${y1}`} stroke="#3e3e3e" strokeWidth="2" />
    </g>
  );
}
const label = (x: number, y: number, t: string) => (
  <text x={x} y={y} textAnchor="middle" fontSize="10.500" fontWeight="bold" fill="#f2f2f2">{t}</text>
);
function Axis({ x, y, h, hx, hc, depth }: { x: number; y: number; h: string; hx: number; hc: string; depth?: [string, string, number] }) {
  return (
    <g fontSize="10" fontWeight="bold">
      <path d={`M${x} ${y}V${y - 14}`} stroke="#19d619" />
      <path d={`M${x} ${y}H${x + hx}`} stroke={hc} />
      <text x={x - 3} y={y - 17} fill="#19d619">y</text>
      <text x={x + hx + (hx > 0 ? -1 : -4)} y={y - 1} fill={hc}>{h}</text>
      {depth && <text x={x + depth[2]} y={y - 1} fill={depth[1]}>{depth[0]}</text>}
    </g>
  );
}

function TopView() {
  return (
    <Stage vb="316 169 281 336" oy={125} over={<>
      {label(449, 497, 'top Z')}
      <defs><linearGradient id="cube" x2="0" y2="1"><stop stopColor="#a6a6a6" /><stop offset="1" stopColor="#8c8c8c" /></linearGradient></defs>
      <rect x="514.700" y="203" width="49.600" height="48.300" fill="url(#cube)" />
      <path d="M547.200 203V251M514 225.300H564" stroke="#7f7f7f" strokeOpacity=".5" />
      <text x="539.500" y="230.500" textAnchor="middle" fontSize="9.500" fontWeight="bold" fontFamily="Liberation Sans, sans-serif" letterSpacing=".4" fill="#505458">BACK</text>
      <Axis x={341.5} y={480.5} h="x" hx={-14} hc="#d01414" depth={['z', '#1414c8', -2]} />
    </>}>
      <Grid xs={[163, 283, 526, 646, 769]} ys={[162, 301, 442, 580, 718, 859, 997, 1137]} thick={405} x0={40} x1={780} />
      <path d="M290 718H520" stroke="#5c4040" />
      <rect x="254" y="139" width="303" height="65" rx="13" ry="15" stroke={W} strokeWidth="2" />
      <path d="M268 139H545M268 204H545" stroke={C} strokeWidth="1.500" />
      <path d={pairs([[266, 293], [323, 351], [386, 413], [451, 478], [517, 545]], 206, 643)} stroke={W} strokeWidth="2" shapeRendering="crispEdges" />
      <path d="M239 645H579V682H239Z" stroke={C} strokeWidth="1.500" />
      <path d={lines([248, 271, 287, 305, 322, 495, 513, 530, 547, 572], 645, 682)} stroke={C} />
      <path d="M257 645V682M560 645V682M257 680H560" stroke={W} strokeWidth="1.500" />
      <path d="M256 684V1137M288 684V1137M522 684V1137M555 684V1137" stroke={W} strokeWidth="2" shapeRendering="crispEdges" />
      <path d="M256 1137H288M522 1137H555" stroke={C} strokeWidth="1.500" />
    </Stage>
  );
}
function FrontView() {
  return (
    <Stage vb="316 551 281 336" oy={505} over={<>{label(448, 879, 'front -Z')}<Axis x={341.5} y={861.5} h="x" hx={14} hc="#d01414" depth={['z', '#1414c8', -2]} /></>}>
      <path d="M268 212Q262 208 262 196V162Q264 149 276 148H549Q563 150 563 162V196Q562 208 552 212" stroke={C} strokeWidth="2" />
      <path d="M272 212H556" stroke={W} strokeWidth="2" />
      <path d={pairs([[274, 301], [340, 366], [405, 432], [468, 495], [522, 549]], 214, 652)} stroke="#a3d6ea" strokeWidth="2" shapeRendering="crispEdges" />
      <Grid xs={[51, 171, 291, 532, 652, 774]} ys={[172, 310, 448, 586, 724, 862, 1000, 1137]} thick={412} x0={40} x1={780} y0={136} />
      <path d="M239 650H579" stroke={C} strokeWidth="1.500" />
      <path d="M239 687H579M260 650V687M560 650V687" stroke={W} strokeWidth="2" />
      <path d={lines([239, 243, 250, 273, 288, 305, 325, 492, 513, 530, 545, 568, 579], 650, 687)} stroke={C} />
      <path d="M266 689V1137M297 689V1137M530 689V1137M561 689V1137" stroke="#a3d6ea" strokeWidth="2" shapeRendering="crispEdges" />
      <path d="M266 1137H297M530 1137H561" stroke={W} strokeWidth="2" />
    </Stage>
  );
}
function SideView() {
  return (
    <Stage vb="604 551 281 336" oy={505} over={<>{label(737, 879, 'side -X')}<Axis x={629.5} y={861.5} h="z" hx={-14} hc="#1414c8" depth={['x', '#c01818', -3]} /></>}>
      <Grid xs={[829, 944, 1060, 1289, 1404, 1521]} ys={[187, 319, 451, 583, 715, 847, 979, 1110]} thick={1175} x0={790} x1={1530} y0={136} />
      <path d="M1283 164H1311V222H1283Z" stroke={W} strokeWidth="1.500" />
      <path d="M1284 168h24v12h-24zM1284 207h24v12h-24z" fill={C} />
      <path d="M1285 180V207M1289 224V644" stroke={C} strokeWidth="1.300" />
      <path d="M1304 226V644" stroke={W} strokeWidth="2" />
      <path d="M985 644H1337M985 679H1337" stroke={C} strokeWidth="1.500" />
      <path d="M1018 644H1304M985 679H1304M1302 644V679" stroke={W} strokeWidth="2" />
      <path d={lines([985, 990, 996, 1006, 1018, 1036, 1054, 1073, 1248, 1268, 1285, 1308, 1319, 1327, 1337], 644, 679)} stroke={C} />
      <path d="M1023 681V1110M1273 681V1110" stroke={C} strokeWidth="1.300" />
      <path d="M1023 1110H1054V681M1273 1110H1304V681" stroke={W} strokeWidth="2" />
    </Stage>
  );
}

/* Ground plane: unit square projected through a fixed camera, repeated over 12 cells per side. */
function groundPoint(u: number, v: number): [number, number, number] {
  const g = 1.0744, h = 1.062;
  const w = 1 + g * u + h * v;
  const x = (405 + g * 1490) * u + (-339 + h * 746) * v + 1085;
  const y = (-182 + g * 805) * u + (-185 + h * 802) * v + 987;
  return [x / w, y / w, w];
}
function groundLine(k: number, swap: boolean) {
  const c = k / 12;
  const start = Math.max(-1, (0.12 - 1 - (swap ? 1.062 : 1.0744) * c) / (swap ? 1.0744 : 1.062));
  const a = swap ? groundPoint(start, c) : groundPoint(c, start);
  const b = swap ? groundPoint(1, c) : groundPoint(c, 1);
  return `M${a[0].toFixed(1)} ${a[1].toFixed(1)}L${b[0].toFixed(1)} ${b[1].toFixed(1)}`;
}
const groundIdx = [-8, -7, -6, -5, -4, -3, -2, -1, 1, 2, 3, 4, 5, 6, 7, 8, 9, 10, 11, 12];

function PerspView() {
  const B = '#5360c4';
  return (
    <Stage vb="604 169 281 336" oy={125} over={<>{label(737, 497, 'persp')}<Axis x={629.5} y={480.5} h="z" hx={-10} hc="#1414c8" depth={['x', '#d01414', 8]} /><path d="M630 480.500H638" stroke="#d01414" /></>}>
      <path d={groundIdx.map((k) => groundLine(k, false) + groundLine(k, true)).join('')} stroke="#464646" />
      <path d={groundLine(0, false) + groundLine(0, true)} stroke="#404040" strokeWidth="2" />
      <path d="M1072 620H1101V932L1088 937L1072 932Z" fill={B} />
      <path d="M1101 620V932L1088 937L1072 932" stroke={W} strokeWidth="1.500" /><path d="M1088 620V937" stroke={C} />
      <path d="M1086 310L1230 262V605H1086Z" fill={B} />
      <path d="M1100 330h9v270h-9zM1131 312h4v288h-4zM1161 300h5v300h-5zM1193 286h4v314h-4z" fill="#8d8fa8" />
      <path d={lines([1086, 1098, 1126, 1143, 1156, 1176, 1188, 1206, 1221], 300, 602)} stroke={C} />
      <path d={lines([1108, 1136, 1168, 1198, 1230], 290, 602)} stroke={W} strokeWidth="1.500" />
      <path d="M1080 288L1222 207L1243 218V250L1236 262L1226 255L1080 325Z" fill={B} />
      <path d="M1080 325V288L1222 207L1227 212V255" stroke={C} strokeWidth="1.500" />
      <path d="M1228 207L1243 218V250L1236 262L1228 262V250L1238 240V222Z" fill={C} stroke={W} />
      <path d="M1078 326L1226 256" stroke={W} strokeWidth="2" />
      <path d="M1103 316h8v8h-8zM1133 300h8v8h-8zM1164 286h8v8h-8zM1195 270h8v8h-8z" fill="#111" />
      <path d="M893 606L985 599L1180 605L1236 607V636H893Z" fill={B} />
      <path d="M995 600H1060V636H995Z" fill="#8f9ae8" fillOpacity=".55" />
      <path d="M893 636V606L985 599L1040 600M1236 607V636" stroke={C} strokeWidth="1.500" />
      <path d={lines([900, 975, 986, 1001, 1021, 1041, 1062, 1084, 1098, 1217, 1229], 603, 636)} stroke={C} />
      <path d="M1040 600L1180 605L1238 607M891 637H1238" stroke={W} strokeWidth="2" />
      <path d="M908 638H944V992L921 999L908 992ZM1203 638H1237V992L1220 999L1203 992ZM1027 638H1072V1086L1048 1097L1027 1084Z" fill={B} />
      <path d="M908 638V992M920 638V996M1203 638V992M1218 638V996M1027 638V1084M1047 638V1093" stroke={C} strokeWidth="1.200" />
      <path d="M944 638V992L921 999L908 992M1237 638V992L1220 999L1203 992M1072 638V1086L1048 1097L1027 1084" stroke={W} strokeWidth="2" />
    </Stage>
  );
}

function Viewports() {
  return (
    <div className="w-[576px] shrink-0 flex flex-col pl-[3px] pt-[3px]">
      <div className="flex h-[378px]">
        <Panel active top="h-[39px]"><TopView /></Panel>
        <div className="w-[5px] flex items-center justify-center"><DotsV c="h-[126px]" /></div>
        <Panel top="h-[39px]"><PerspView /></Panel>
      </div>
      <div className="h-[4px] flex justify-center pt-px"><DotsH c="w-[188px]" /></div>
      <div className="flex h-[377px]">
        <Panel top="h-[39px]"><FrontView /></Panel>
        <div className="w-[5px] flex items-center justify-center"><DotsV c="h-[126px]" /></div>
        <Panel top="h-[39px]"><SideView /></Panel>
      </div>
    </div>
  );
}

/* ---------- UV editor ---------- */

type P = [number, number];
type Leg = { n: [P, P, P, P]; w: [P, P, P, P] };
const legs: Leg[] = [
  { n: [[163, 893], [193, 890], [216, 1311], [188, 1314]], w: [[172, 1316], [232, 1310], [253, 1697], [193, 1702]] },
  { n: [[241, 908], [272, 905], [306, 1363], [277, 1366]], w: [[246, 1368], [338, 1362], [366, 1760], [275, 1767]] },
  { n: [[713, 942], [745, 938], [777, 1399], [750, 1401]], w: [[719, 1403], [811, 1395], [838, 1793], [747, 1800]] },
  { n: [[808, 884], [840, 880], [875, 1341], [846, 1344]], w: [[813, 1346], [906, 1338], [934, 1736], [842, 1743]] },
  { n: [[896, 739], [926, 735], [949, 1155], [920, 1157]], w: [[906, 1158], [967, 1153], [988, 1540], [926, 1545]] },
  { n: [[968, 1082], [999, 1078], [1031, 1538], [1004, 1540]], w: [[975, 1543], [1065, 1536], [1093, 1934], [1003, 1940]] },
  { n: [[1075, 1132], [1104, 1129], [1122, 1550], [1099, 1552]], w: [[1086, 1554], [1147, 1549], [1163, 1935], [1104, 1940]] },
  { n: [[1127, 899], [1157, 896], [1178, 1316], [1152, 1318]], w: [[1136, 1320], [1198, 1316], [1217, 1702], [1155, 1707]] },
  { n: [[1193, 880], [1222, 877], [1243, 1295], [1217, 1297]], w: [[1200, 1299], [1261, 1294], [1281, 1683], [1219, 1688]] },
];
const poly = (p: P[]) => 'M' + p.map((q) => q.join(' ')).join('L') + 'Z';
const mix = (a: P, b: P, t: number): P => [a[0] + (b[0] - a[0]) * t, a[1] + (b[1] - a[1]) * t];
const seg = (a: P, b: P) => `M${a[0]} ${a[1]}L${b[0]} ${b[1]}`;

function UVCanvas() {
  const fill = '#2d48d2', edge = '#d2d4e0', cy = '#13b4dd';
  const gx = [1, 2, 3, 4, 5, 6, 7, 8, 9].map((k) => 125 + k * 120.3);
  const gy = [-3, -2, -1, 1, 2, 3, 4, 5, 6, 7, 8, 9, 11, 12, 13, 14].map((k) => 1940 - k * 120.3);
  return (
    <svg className="w-[452px] h-[689px] block bg-[#5c5c5c]" viewBox="893 199 452 689" fill="none">
      <g transform="matrix(0.33333 0 0 0.33333 890 120)" className="[&_*]:[vector-effect:non-scaling-stroke]">
        <path d={gx.map((x) => `M${x} 230V2310`).join('') + gy.map((y) => `M0 ${y}H1370`).join('')} stroke="#525252" shapeRendering="crispEdges" />
        <path d="M0 737H1370M1328 230V2310" stroke="#0a0a0a" shapeRendering="crispEdges" />
        <path d="M0 1940H1370M125 230V2310" stroke="#0d0dbe" shapeRendering="crispEdges" />
        <path d="M125 1940H727" stroke="#c81e1e" shapeRendering="crispEdges" />
        <path d="M125 1940V1339" stroke="#22b422" shapeRendering="crispEdges" />
        <path d="M436 1162L600 1142Q712 1140 712 1230L708 1425Q706 1475 688 1507L692 1552Q728 1580 730 1625L727 1800Q724 1850 706 1876L640 1915L500 1905L388 1860Q372 1835 374 1795L383 1620Q386 1575 410 1553V1507Q388 1485 384 1455L350 1260Q352 1185 436 1162Z" fill={fill} stroke={edge} strokeWidth="1.700" />
        <path d="M410 1507Q420 1520 445 1514L640 1512Q680 1510 688 1505M410 1553Q430 1545 480 1542L640 1540Q680 1540 692 1552M424 1516V1550M442 1514V1547M460 1514V1546M478 1514V1544M622 1512V1541M640 1512V1541M656 1512V1541M672 1510V1545" stroke={cy} />
        <path d="M126 1690L143 1665L380 1850Q420 1888 470 1897L620 1908Q670 1905 710 1876L968 1718L983 1742L720 1905Q660 1942 620 1942L440 1930Q400 1922 370 1890Z" fill={fill} stroke={edge} strokeWidth="1.700" />
        <path d="M385 1854Q420 1888 470 1897L620 1908Q670 1905 706 1878" stroke={fill} strokeWidth="2.500" />
        <path d="M380 1850Q420 1888 470 1897L620 1908Q670 1905 710 1876M148 1700L165 1682M175 1728L190 1710M325 1845L342 1822M345 1862L362 1838M362 1880L380 1856M382 1895L400 1870M398 1910L415 1882M415 1922L430 1890M450 1928L455 1897M605 1940L612 1910M640 1940L635 1910M675 1930L660 1902M695 1922L682 1895M720 1905L705 1880M740 1892L725 1868M765 1875L755 1850M935 1770L920 1748M950 1762L937 1740M965 1752L950 1730" stroke={cy} />
        <path d="M437 860L710 988L697 1012L700 1020L672 1060L664 1088L687 1098L668 1145L640 1135L378 1012L371 1001L347 998L360 955L375 945L400 960L412 935L417 905L437 880Z" fill={fill} stroke={edge} strokeWidth="1.700" />
        <path d="M440 888L690 1007M413 937L665 1057M405 960L660 1082M388 964L372 1000M645 1130L660 1090M652 1094L682 1106" stroke={cy} />
        <path d="M440 866L450 868L446 888L434 884ZM414 937L420 940L412 962L400 958ZM352 990L373 994L370 1003L350 998ZM700 986L710 990L700 1010L690 1004ZM660 1056L672 1060L664 1084L654 1080ZM646 1130L668 1138L664 1146L646 1138Z" fill="#0fc4dc" />
        {legs.map(({ n, w }, i) => (
          <g key={i}>
            <path d={poly(n)} fill={fill} stroke={edge} strokeWidth="1.700" />
            <path d={poly(w)} fill={fill} stroke={edge} strokeWidth="1.700" />
            <path d={seg(n[3], n[2])} stroke={fill} strokeWidth="2" />
            <path d={seg(n[3], n[2]) + seg(mix(n[0], n[3], 0.04), mix(n[1], n[2], 0.04)) + seg(mix(n[3], n[0], 0.06), mix(n[2], n[1], 0.06)) + seg(mix(w[0], w[1], 0.32), mix(w[3], w[2], 0.32)) + seg(mix(w[0], w[1], 0.66), mix(w[3], w[2], 0.66))} stroke={cy} />
          </g>
        ))}
      </g>
      <g fontSize="10" fontFamily="Liberation Sans, sans-serif" letterSpacing="0" fill="#2c2c2c">
        {[14, 13, 12, 11, 10, 9, 8, 7, 6, 5, 4, 3, 1, -1, -2, -3].map((k) => (
          <text key={k} x="931.500" y={765.5 - k * 40.1}>{k / 10}</text>
        ))}
        <text x="894" y="765.500">0.1</text>
        {[0, 1, 2, 3, 4, 5, 6, 7, 8, 9, 10].map((k) => (
          <text key={k} x={931.7 + k * 40.1} y="765.500" fillOpacity={k > 0 && k < 10 ? 0.8 : 1}>{k / 10}</text>
        ))}
      </g>
      <text x="1340" y="881" textAnchor="end" textLength="287" fontSize="10.500" fontWeight="bold" fontFamily="Liberation Sans, sans-serif" fill="#dcdcdc">(0/11) UV shells, (0/0) overlapping UVs, (0/0) reversed UVs</text>
    </svg>
  );
}

function UVEditor() {
  return (
    <div className="w-[461px] shrink-0 flex flex-col border-l-3 border-[#393939]">
      <div className="h-[18px] bg-[#373737] pl-[1px] pt-[2px]">
        <div className="w-[70px] h-full bg-[#444444] flex items-center justify-center pt-[2px] text-[#e6e6e6]">UV Editor</div>
      </div>
      <div className="h-[22px] flex items-center pl-[9px] pt-px">
        <Menu items={[['Edit', 'w-[35px]'], ['Create', 'w-[48px]'], ['Select', 'w-[45px]'], ['Cut/Sew', 'w-[58px]'], ['Modify', 'w-[51px]'], ['Tools', 'w-[42px]'], ['View', 'w-[40px]'], ['Image', 'w-[46px]'], ['Textures', 'w-[70px]']]} />
        <span className="text-[#2c2c2c]">»</span>
      </div>
      <div className="h-[33px] flex items-center pl-[8px] pt-px">
        <Cell w="w-[22px]"><I><path d="M7 2H16V15.500H2V8.500H16M9 2V15.500" stroke={G} strokeWidth="1.300" /></I></Cell>
        <Cell w="w-[22px]" on><I><path d="M8 1H17V17H1V8H8Z" fill={E} stroke="#33493f" /><path d="M8 8H17M9 8V17M9 5H17" stroke="#33493f" /></I></Cell>
        <Cell w="w-[24px]"><I><path d="M9 1H16V8L9 8Z" fill="#4b9474" /><path d="M2 8H16V16H12L2 8Z" fill={E} /><path d="M2 8V16H12Z" fill={G} /></I></Cell>
        <div className="w-px h-[20px] bg-[#3a3a3a] ml-[3px] mr-px" />
        <Cell w="w-[22px]" on><I><rect x="1" y="1" width="16" height="16" fill="#2f3a36" stroke={G} /><rect x="3.500" y="3.500" width="11" height="11" stroke={E} /><path d="M6 6h2.500v2.500H6zM9.500 6H12v2.500H9.500zM6 9.500h2.500V12H6zM9.500 9.500H12V12H9.500z" fill={E} /></I></Cell>
        <Cell w="w-[24px]"><I><rect x="2" y="2" width="14" height="14" fill="#33453d" stroke="#8a8a8a" strokeWidth="0.800" /><path d="M4 4h4v4H4zM10 4h4v4h-4zM4 10h4v4H4zM10 10h4v4h-4z" fill="#3f6b57" /></I></Cell>
        <div className="w-px h-[20px] bg-[#3a3a3a] mx-[2px]" />
        <Cell w="w-[22px]" on><I><rect x="1" y="1" width="16" height="16" fill="#333" /><path d="M2 2H16V16H2ZM2 6.700H16M2 11.300H16M6.700 2V16M11.300 2V16" stroke={G} strokeWidth="1.300" /></I></Cell>
        <Cell w="w-[24px]"><I><circle cx="9" cy="9" r="8" stroke={G} strokeDasharray="3 1.500" /><circle cx="9" cy="9" r="4.300" fill={G} /></I></Cell>
        <div className="w-px h-[20px] bg-[#3a3a3a] ml-px" />
        <div className="w-[133px] h-[22px] ml-[2px] bg-[#404040] flex items-center shrink-0">
          <I c="w-[16px] h-[14px] ml-[4px]" vb="0 0 16 14"><path d="M0 1H4V0H8V1H16V14H0Z" fill={G} /><circle cx="8" cy="7.500" r="4.500" stroke={K} strokeWidth="1.200" /><circle cx="8" cy="7.500" r="2.300" stroke={K} /></I>
          <span className="pl-[4px] text-[#d0d0d0]">standardSurface1</span>
        </div>
        <Cell w="w-[26px]"><I c="w-[19px] h-[18px]" vb="0 0 19 18"><circle cx="9.500" cy="9" r="7.800" stroke={E} strokeWidth="1.200" /><rect x="0" y="5.500" width="19" height="7" fill={K} /><text x="0" y="12.500" fontSize="8.500" fontWeight="bold" textLength="19" fill={E}>RGB</text></I></Cell>
        <Cell w="w-[20px]"><I c="w-[15px] h-[15px]" vb="0 0 15 15"><rect width="15" height="15" fill={E} /><path d="M1 14L6 5L9 9L11 7L14 14Z" fill="#2f4a3e" /><circle cx="11" cy="3.500" r="1.500" fill="#2f4a3e" /></I></Cell>
        <div className="w-[53px] h-[14px] ml-[3px] flex items-center shrink-0">
          <div className="w-[24px] h-[4px] bg-[#2b2b2b]" /><div className="w-[7px] h-[13px] bg-[#c6c6c6] rounded-[1px]" /><div className="w-[22px] h-[4px] bg-[#2b2b2b]" />
        </div>
        <Handle w="w-[19px]" /><Handle w="w-[4px]" />
      </div>
      <div className="ml-[2px]"><UVCanvas /></div>
    </div>
  );
}

/* ---------- UV toolkit ---------- */

function Header({ t, open = false, sub = false }: { t: string; open?: boolean; sub?: boolean }) {
  return (
    <div className={`h-[20px] bg-[#3d3d3d] rounded-[2px] flex items-center shrink-0 ${sub ? 'mx-[6px]' : ''} mb-[2px]`}>
      <div className="w-[28px] pl-[8px] pb-[4px]">
        {open ? <I c="w-[11px] h-[6px]" vb="0 0 11 6"><path d="M0 0H11L5.500 6Z" fill="#eee" /></I> : <I c="w-[6px] h-[11px] ml-[2px]" vb="0 0 6 11"><path d="M0 0V11L6 5.500Z" fill="#eee" /></I>}
      </div>
      <span className="font-semibold text-[11.5px] tracking-[-0.5px] text-[#c4c4c4] pt-[2px]">{t}</span>
    </div>
  );
}
function Radio({ t, on = false, dim = false }: { t: string; on?: boolean; dim?: boolean }) {
  return (
    <div className={`h-[18px] flex items-center pl-[8px] gap-[8px] ${dim ? 'text-[#7a7a7a]' : 'text-[#c4c4c4]'}`}>
      <div className="w-[10px] h-[10px] mb-[3px] rounded-full bg-[#2b2b2b] flex items-center justify-center">{on && <div className="w-[7px] h-[7px] rounded-full bg-[#dcdcdc]" />}</div>
      {t}
    </div>
  );
}
const corner = (x: number, y: number) => <rect x={x} y={y} width="4" height="4" fill={K} stroke={E} strokeWidth="1.200" />;
const frame = <><rect x="4" y="4" width="20" height="20" stroke={G} strokeWidth="1.200" />{corner(2, 2)}{corner(22, 2)}{corner(2, 22)}{corner(22, 22)}</>;

function UVToolkit() {
  return (
    <div className="w-[289px] shrink-0 flex flex-col border-l-3 border-[#393939]">
      <div className="h-[18px] bg-[#373737] pt-[2px]">
        <div className="w-[74px] h-full bg-[#444444] flex items-center justify-center pt-[2px] text-[#e6e6e6]">UV Toolkit</div>
      </div>
      <Menu c="h-[22px] pl-[9px] pt-px" items={[['Options', 'w-[57px]'], ['Help', 'w-[40px]']]} />
      <div className="flex-1 flex flex-col pl-[4px] pr-[5px] pt-[3px]">
        <Header t="Selection" open />
        <div className="h-[46px] flex items-center pl-[25px]">
          <I c="w-[28px] h-[28px]" vb="0 0 28 28">{frame}</I>
          <I c="w-[30px] h-[28px] ml-[8px]" vb="0 0 30 28"><path d="M15 1V1L2 14L15 27L28 14" stroke={G} strokeWidth="1.300" /><path d="M15 1L28 14" stroke={E} strokeWidth="1.300" /></I>
          <I c="w-[28px] h-[28px] ml-[7px]" vb="0 0 28 28"><path d="M14 0L26 6V21L14 28L2 21V6Z" fill={G} /><path d="M26 7L14 13.500V28L26 21Z" fill={E} /><path d="M2 6L14 13L26 6M14 13V28" stroke={K} /></I>
          <div className="w-px h-[36px] bg-[#575757] ml-[20px]" />
          <I c="w-[28px] h-[28px] ml-[19px]" vb="0 0 28 28">{frame}<path d="M10 10h3v3h-3zM15 10h3v3h-3zM12.500 12.500h3v3h-3zM10 15h3v3h-3zM15 15h3v3h-3z" fill={G} /></I>
          <div className="w-[36px] h-[36px] bg-[#5285a6] ml-[5px] flex items-center justify-center">
            <I c="w-[28px] h-[28px]" vb="0 0 28 28"><rect x="1" y="1" width="26" height="26" stroke="#2f3f3a" strokeWidth="2.500" /><path d="M2 2H26V26H2ZM14 2V26M2 14H26" stroke="#2f3f3a" strokeWidth="4" /><path d="M2 2H26V26H2ZM14 2V26M2 14H26" stroke={E} strokeWidth="1.300" /></I>
          </div>
        </div>
        <div className="h-[27px]" />
        <Radio t="Pick/Marquee" on /><Radio t="Drag" /><Radio t="Tweak/Marquee" dim />
        <div className="h-[5px]" />
        <div className="h-[27px] flex items-center pl-[7px] text-[#c4c4c4]">
          <span className="w-[64px]">Symmetry:</span><Down w="w-[24px]" />
          <div className="w-[146px] h-[22px] bg-[#404040] flex items-center pl-[6px]">Off</div>
          <I c="w-[18px] h-[18px] ml-[7px]" vb="0 0 18 18"><path d="M1 1H8V16L1 13ZM10 1H17V13L10 16Z" fill={E} /><path d="M1 7H17" stroke={K} /><path d="M9 0V18" stroke={G} strokeDasharray="3 1.500" /></I>
        </div>
        {['Selection Constraint:', 'Transform Constraint:'].map((t) => (
          <div key={t} className="h-[27px] flex items-center pl-[7px] text-[#c4c4c4]">
            <span className="w-[118px]">{t}</span><Down w="w-[25px]" />
            <div className="w-[118px] h-[22px] bg-[#404040] flex items-center pl-[7px]">Off</div>
          </div>
        ))}
        <div className="flex gap-[12px] pl-[37px] mt-[6px]">
          {['All', 'Clear', 'Inverse'].map((t) => <div key={t} className="w-[50px] h-[20px] bg-[#5d5d5d] rounded-[1px] flex items-center justify-center text-[#e0e0e0]">{t}</div>)}
        </div>
        <div className="h-[32px] flex pl-[63px] pt-[8px]">
          <I c="w-[18px] h-[17px]" vb="0 0 18 17"><path d="M0 3H6M18 3H12M4 1L7 3L4 5M14 1L11 3L14 5" stroke={E} /><path d="M2 10h4v4H2zM12 10h4v4h-4z" fill={G} /><path d="M7 10h4v4H7z" fill={E} /></I>
          <I c="w-[18px] h-[17px] ml-[14px]" vb="0 0 18 17"><path d="M0 3H6M18 3H12M4 1L7 3L4 5M14 1L11 3L14 5" stroke={E} /><path d="M2 8h4v4H2zM12 8h4v4h-4zM2 13h4v4H2zM12 13h4v4h-4z" fill={G} /><path d="M7 8h4v4H7zM7 13h4v4H7z" fill={E} /></I>
          <I c="w-[18px] h-[17px] ml-[24px]" vb="0 0 18 17"><path d="M1 3H17M4 0.500L1 3L4 5.500M14 0.500L17 3L14 5.500" stroke={E} /><path d="M2 8h4v4H2zM12 8h4v4h-4zM2 13h4v4H2zM12 13h4v4h-4zM7 8h4v4H7zM7 13h4v4H7z" fill={E} /></I>
          <I c="w-[18px] h-[17px] ml-[14px]" vb="0 0 18 17"><path d="M1 3H17M4 0.500L1 3L4 5.500M14 0.500L17 3L14 5.500" stroke={E} /><path d="M2 10h4v4H2zM12 10h4v4h-4zM7 10h4v4H7z" fill={E} /></I>
        </div>
        <Header t="Pinning" sub /><Header t="Select By Type" sub /><Header t="Soft Selection" sub />
        <div className="h-[6px]" />
        {['Transform', 'Create', 'Cut and Sew', 'Unfold', 'Align and Snap', 'Arrange and Layout'].map((t) => <Header key={t} t={t} />)}
        <div className="flex-1" />
        <div className="h-[5px] flex justify-center"><DotsH c="w-[94px]" /></div>
        <div className="-ml-[2px] -mr-[2px]"><Header t="UV Sets" /></div>
        <div className="h-[2px]" />
      </div>
    </div>
  );
}

/* ---------- channel box ---------- */

function ChannelBox() {
  const layer = <path d="M0 8L6 3L12 8L6 13Z" fill={G} />;
  return (
    <div className="w-[266px] shrink-0 flex flex-col border-l-3 border-[#393939]">
      <div className="h-[22px] flex justify-end gap-[6px] pt-[3px] pr-[6px]">
        <I c="w-[15px] h-[16px]" vb="0 0 15 16"><path d="M7.500 6V12M7.500 11L3 13M7.500 11L12 13" stroke={G} /><path d="M7.500 1L10 5H5Z" fill="#8fc24a" /><path d="M4 10V15H0Z" fill="#3f6fd8" /><path d="M11 10V15H15Z" fill="#d8413f" /></I>
        <I c="w-[15px] h-[16px]" vb="0 0 15 16"><circle cx="7.500" cy="7.500" r="5" stroke={T} strokeWidth="4" /><path d="M5 10H10V16H5Z" fill={K} /><path d="M9 11L13 15" stroke="#777" strokeWidth="2" /></I>
        <I c="w-[14px] h-[16px]" vb="0 0 14 16"><path d="M1 1V14H14" stroke="#9a9a9a" strokeWidth="1.200" /><path d="M3 12L12 3" stroke={T} strokeWidth="2" /><path d="M13 1V7L8 2Z" fill={T} /></I>
      </div>
      <Menu c="h-[22px] pl-[11px] pt-px" items={[['Channels', 'w-[63px]'], ['Edit', 'w-[35px]'], ['Object', 'w-[49px]'], ['Show', 'w-[40px]']]} />
      <div className="h-[145px]" />
      <div className="h-[39px] text-center leading-[13px] font-semibold text-[11.5px] tracking-[-0.45px] text-[#c4c4c4]">Select objects in the scene to view,<br />edit and set keyframes on channels<br />(attributes)</div>
      <div className="flex-1" />
      <div className="h-[9px] flex justify-center"><DotsH c="w-[86px]" /></div>
      <div className="h-[376px] mx-[4px] mb-[4px] border border-[#373737] flex flex-col shrink-0">
        <div className="h-[18px] bg-[#373737] flex pl-[1px] pt-px shrink-0">
          <div className="w-[58px] bg-[#444444] flex items-center justify-center text-[#e6e6e6]">Display</div>
          <div className="w-[48px] ml-[2px] mt-px border-x border-t border-[#2f2f2f] flex items-center justify-center text-[#8b8b8b]">Anim</div>
        </div>
        <Menu c="h-[22px] pl-[9px]" items={[['Layers', 'w-[46px]'], ['Options', 'w-[57px]'], ['Help', 'w-[40px]']]} />
        <div className="h-[25px] flex justify-end gap-[7px] pr-[6px] pt-[2px]">
          <I c="w-[16px] h-[14px]" vb="0 0 16 14">{layer}<path d="M11.500 3V13M8.500 5L11.500 2L14.500 5Z" stroke={T} strokeWidth="2" /></I>
          <I c="w-[16px] h-[14px]" vb="0 0 16 14">{layer}<path d="M11.500 3V12M8.500 10L11.500 13L14.500 10Z" stroke={T} strokeWidth="2" /></I>
          <I c="w-[16px] h-[14px] ml-[4px]" vb="0 0 16 14">{layer}<path d="M11.500 0V8M7.500 4H15.500" stroke={T} strokeWidth="2.500" /></I>
          <I c="w-[16px] h-[14px]" vb="0 0 16 14">{layer}<circle cx="11.500" cy="4.500" r="4" fill={T} /></I>
        </div>
        <div className="flex-1 mx-[3px] mb-[3px] bg-[#2b2b2b] flex flex-col justify-end">
          <div className="h-[11px] bg-[#333] flex items-center justify-between px-[2px]">
            <I c="w-[5px] h-[9px]" vb="0 0 5 9"><path d="M5 0V9L0 4.500Z" fill={G} /></I>
            <div className="w-[154px] h-[10px] rounded-full bg-[#5d5d5d] mr-[65px]" />
            <I c="w-[5px] h-[9px]" vb="0 0 5 9"><path d="M0 0V9L5 4.500Z" fill={G} /></I>
          </div>
        </div>
      </div>
    </div>
  );
}

function SideTabs() {
  const base = 'flex items-center justify-start [writing-mode:vertical-rl] text-[11px] leading-[14px] whitespace-nowrap pr-[3px]';
  return (
    <div className="w-[16px] shrink-0 bg-[#373737] flex flex-col items-stretch pt-[2px]">
      <div className={`${base} h-[155px] pt-[11px] tracking-[-0.12px] bg-[#444444] text-[#e6e6e6]`}>Channel Box / Layer Editor</div>
      <div className={`${base} h-[103px] mt-[2px] pt-[10px] tracking-[0px] border-y border-[#2b2b2b] text-[#8f8f8f]`}>Attribute Editor</div>
      <div className={`${base} h-[110px] mt-px pt-[10px] tracking-[0px] border-y border-[#2b2b2b] text-[#8f8f8f]`}>Modeling Toolkit</div>
    </div>
  );
}

/* ---------- time slider ---------- */

const transport: ReactNode[] = [
  <><path d="M1 1V15" stroke={G} strokeWidth="1.500" /><path d="M9 3V13L3 8ZM16 3V13L10 8Z" fill={G} /></>,
  <><path d="M3 1V15" stroke={G} strokeWidth="1.500" /><path d="M14 2V14L6 8Z" fill={G} /></>,
  <><path d="M4 0V16" stroke="#e07a3e" strokeWidth="2" /><path d="M14 2V14L7 8Z" fill={G} /></>,
  <path d="M14 1V15L3 8Z" fill={G} />,
  <path d="M3 1V15L14 8Z" fill={G} />,
  <><path d="M13 0V16" stroke="#e07a3e" strokeWidth="2" /><path d="M2 2V14L10 8Z" fill={G} /></>,
  <><path d="M13 1V15" stroke={G} strokeWidth="1.500" /><path d="M2 2V14L10 8Z" fill={G} /></>,
  <><path d="M15 1V15" stroke={G} strokeWidth="1.500" /><path d="M0 3V13L6 8ZM7 3V13L13 8Z" fill={G} /></>,
];

function TimeSlider() {
  const frames = Array.from({ length: 24 }, (_, i) => (i + 1) * 5);
  return (
    <div className="h-[52px] shrink-0 flex border-t-3 border-[#393939]">
      <div className="w-[16px] flex gap-[2px] pl-[3px] pt-[4px]"><DotsV c="h-[42px]" /><DotsV c="h-[42px]" /></div>
      <svg className="w-[1613px] h-[49px] block shrink-0" viewBox="16 893 1613 49" shapeRendering="crispEdges">
        <rect x="16" y="901" width="1613" height="32" fill="#2b2b2b" />
        <rect x="24" y="893" width="13" height="48" fill="#6a6a6a" fillOpacity=".45" />
        <rect x="30" y="919" width="8" height="11" fill="#2b2b2b" />
        <rect x="24" y="933" width="1596" height="2" fill="#666" />
        {frames.map((f) => {
          const x = Math.round(23.7 + (f - 1) * 13.3) + 0.5;
          return (
            <g key={f}>
              <path d={`M${x} 893V901M${x} 935V941`} stroke="#2b2b2b" />
              <path d={`M${x} 917V932`} stroke="#8f8f8f" />
              <text x={x + (f < 10 ? 7 : 5.5)} y="912" fontSize="11" fill="#9b9b9b">{f}</text>
            </g>
          );
        })}
        <text x="31" y="928" fontSize="11" fill="#e6e6e6">1</text>
      </svg>
      <div className="w-[49px] h-[20px] mt-[14px] ml-[9px] bg-[#2b2b2b] rounded-sm flex items-center pl-[5px] text-[#c8c8c8] shrink-0">1</div>
      <div className="flex-1 flex items-center pl-[5px] pb-[2px]">
        {transport.map((n, i) => <div key={i} className="w-[28px] flex justify-center"><I c="w-[16px] h-[16px]" vb="0 0 16 16">{n}</I></div>)}
      </div>
    </div>
  );
}

function RangeSlider() {
  const box = 'h-[20px] flex items-center shrink-0 text-[#d0d0d0]';
  return (
    <div className="h-[38px] shrink-0 flex items-center border-t-2 border-[#393939] pb-px">
      <div className="w-[17px] flex gap-[2px] pl-[3px]"><DotsV c="h-[30px]" /><DotsV c="h-[30px]" /></div>
      <div className={`${box} w-[49px] bg-[#2b2b2b] rounded-sm pl-[5px]`}>1</div>
      <div className={`${box} w-[1090px] ml-[10px] bg-[#2b2b2b] rounded-sm pl-[2px]`}>
        <div className="w-[662px] h-[16px] bg-[#464646] flex items-center">
          <div className="w-[8px] h-full bg-[#9b9b9b]" /><span className="pl-[8px] w-[300px]">1</span>
          <div className="flex-1 flex gap-[2px] pl-[21px]"><DotsV c="h-[10px]" /><DotsV c="h-[10px]" /></div>
          <span className="pr-[8px]">120</span><div className="w-[8px] h-full bg-[#9b9b9b]" />
        </div>
      </div>
      <div className={`${box} w-[50px] ml-[9px] bg-[#2b2b2b] rounded-sm pl-[4px]`}>200</div>
      <Sep w="w-[42px]" />
      <Cell w="w-[24px]"><I><path d="M3 2H12V17L7.500 12L3 17Z" fill="#e07a3e" /><path d="M8 4H16M12 0V8" stroke={K} strokeWidth="4" /><path d="M8.500 4H16M12 0V8" stroke={G} strokeWidth="1.800" /></I></Cell>
      <Sep w="w-[40px]" />
      <Down w="w-[20px]" f="#7d7d7d" />
      <div className={`${box} w-[101px] border border-[#393939] rounded-sm pl-[5px]`}>No Character Set</div>
      <Down w="w-[38px]" f="#7d7d7d" />
      <div className={`${box} w-[101px] border border-[#393939] rounded-sm pl-[4px] -ml-[6px]`}>No Anim Layer</div>
      <Sep w="w-[44px]" />
      <div className={`${box} w-[97px] bg-[#5d5d5d] pl-[3px] text-[#c8c8c8]`}><span className="flex-1">24 fps</span><div className="w-px h-full bg-[#4c4c4c]" /><Down w="w-[19px]" f={G} /></div>
      <Cell w="w-[44px]"><I c="w-[17px] h-[15px]" vb="0 0 17 15"><path d="M1 8V4H12M16 7V11H5" stroke={G} strokeWidth="2" /><path d="M11 0L16 4L11 8ZM6 7L1 11L6 15Z" fill={G} /></I></Cell>
      <Cell w="w-[23px]" on><I><rect x="1" y="3" width="16" height="13" fill="#3b2c20" /><rect x="2" y="4" width="14" height="11" stroke={O} strokeWidth="1.500" strokeDasharray="2 1" /><path d="M4.500 7h3v5h-3zM8.500 7h3v5h-3zM12.500 7h2v5h-2z" fill={O} /><path d="M11 0L15 0L16 4L13 5Z" fill={G} /></I></Cell>
      <Sep w="w-[43px]" />
      <Cell w="w-[21px]"><I><path d="M0 6H4L9 1V17L4 12H0Z" fill={G} /><path d="M11 6Q13 9 11 12M13 4Q16.500 9 13 14" stroke={G} strokeWidth="1.300" /></I></Cell>
      <Cell w="w-[36px]"><I><path d="M15 5A7.500 7.500 0 1 0 16 11" stroke="#9b9b9b" strokeWidth="1.500" /><path d="M9 4V14M5 10H13" stroke="#c9713d" strokeWidth="2" /></I></Cell>
      <Cell w="w-[22px]"><I><circle cx="4" cy="4" r="3" stroke="#9b9b9b" strokeWidth="1.500" /><circle cx="13" cy="4.500" r="2" fill="#e07a3e" /><path d="M5 9L9 7L13 9L16 8M11 8L9 13L13 17M9 13L4 16" stroke="#e07a3e" strokeWidth="2" /></I></Cell>
    </div>
  );
}

function CommandLine() {
  return (
    <div className="h-[37px] shrink-0 flex items-center border-t-2 border-[#393939] pb-px">
      <div className="w-[16px] flex gap-[2px] pl-[3px]"><DotsV c="h-[30px]" /><DotsV c="h-[30px]" /></div>
      <div className="w-[16px] h-[16px] rounded-full bg-[#7cb83b] flex items-center justify-center font-bold text-[12px] text-[#2d4a10]">?</div>
      <span className="w-[782px] pl-[8px] text-[11px] tracking-[-0.1px] text-[#d0d0d0]">Select Tool: select a component</span>
      <div className="w-[5px] h-full border-l-2 border-[#393939]" />
      <div className="w-[14px] flex gap-[2px]"><DotsV c="h-[30px]" /><DotsV c="h-[30px]" /></div>
      <span className="w-[29px] text-[#e0e0e0]">MEL</span>
      <div className="w-[398px] h-[20px] bg-[#2b2b2b] rounded-sm" />
      <div className="w-[5px] flex justify-center"><DotsV c="h-[12px]" /></div>
      <div className="w-[618px] h-[20px] bg-[#2b2b2b] rounded-sm" />
      <I c="w-[18px] h-[18px] ml-[10px]" vb="0 0 18 18"><rect width="18" height="3" fill={G} /><rect y="4" width="18" height="14" fill={G} /><path d="M6 6Q4.500 6 4.500 8T3 11Q4.500 11 4.500 13.500T6 16M12 6Q13.500 6 13.500 8T15 11Q13.500 11 13.500 13.500T12 16M9 8V10M9 12V14" stroke={K} strokeWidth="1.300" /></I>
    </div>
  );
}

/* ---------- taskbar ---------- */

function TaskIcon({ w = 'w-[49px]', on = false, line = false, children }: { w?: string; on?: boolean; line?: boolean; children: ReactNode }) {
  return (
    <div className={`${w} h-[40px] shrink-0 flex flex-col items-center justify-between ${on ? 'bg-[#6b5a5c]' : ''}`}>
      <div className="h-[37px] flex items-center pt-[3px]">{children}</div>
      {line && <div className={`h-[2px] ${on ? 'w-full' : 'w-[40px]'} bg-[#d8bfe0]`} />}
    </div>
  );
}

function Taskbar() {
  return (
    <div className="h-[40px] shrink-0 flex items-center text-white bg-[linear-gradient(90deg,#2b2021_0%,#33211f_18%,#3a2020_26%,#3a2020_36%,#2c2b25_48%,#2a2a24_65%,#2f2926_72%,#4a4230_80%,#2d302e_87%,#1f2c30_100%)]">
      <div className="w-[48px] pl-[16px]"><I c="w-[16px] h-[16px]" vb="0 0 16 16"><path d="M0 2.200L7 1.200V7.500H0ZM8 1L16 0V7.500H8ZM0 8.500H7V14.800L0 13.800ZM8 8.500H16V16L8 15Z" fill="#fff" /></I></div>
      <div className="w-[288px] h-[40px] bg-[#f2f2f2] border border-[#b9b9b9] flex items-center text-[#333]">
        <I c="w-[17px] h-[17px] ml-[11px]" vb="0 0 17 17"><circle cx="11" cy="6" r="5" stroke="#333" strokeWidth="1.300" /><path d="M7.500 9.500L1 16" stroke="#333" strokeWidth="1.300" /></I>
        <span className="ml-[11px] w-[173px] text-[14px] tracking-[-0.05px]">Type here to search</span>
        <I c="w-[66px] h-[38px]" vb="0 0 66 38">
          <path d="M31 4h6v33h-6z" fill="#3f9a86" /><path d="M31 10h6M31 16h6" stroke="#e0c25a" strokeWidth="1.500" />
          <path d="M36 7Q41 4 46 7V37H36Z" fill="#e08a2c" /><path d="M37 11h9M37 31h9" stroke="#f6c66a" strokeWidth="1.500" /><path d="M40 16Q44 19 41 22T42 28" stroke="#5a2e10" />
          <path d="M46 11h4v26h-4z" fill="#c8a05a" /><path d="M50 3h7v34h-7z" fill="#b8322a" /><path d="M50 12h7M50 30h7" stroke="#e8b34a" strokeWidth="1.500" /><path d="M57 6h6v31h-6z" fill="#5f8a78" /><path d="M57 12h6M57 31h6" stroke="#c9b96a" strokeWidth="1.500" />
          <path d="M9 38Q10 33 14 32L24 21Q30 24 32 30Q36 32 36 38Z" fill="#22242e" /><path d="M14 32L18 38H12Z" fill="#f2f2f2" /><path d="M5 9Q9 2 19 4L24 10Q27 16 24 22L18 26H10Q5 18 5 9Z" fill="#dcb8a0" /><path d="M0 16Q-1 8 7 4Q12 -1 20 3Q27 6 25 14Q25 19 22 20L20 14Q20 8 14 7Q8 8 6 13Q5 18 2 18Z" fill="#5a493a" /><path d="M9 22Q14 19 18 22Q20 28 15 32Q8 33 7 26Z" fill="#54443a" /><path d="M8 14h3M14 14h3" stroke="#3a2a20" strokeWidth="1.200" />
        </I>
      </div>
      <TaskIcon w="w-[48px]"><I c="w-[18px] h-[16px]" vb="0 0 18 16"><path d="M1 0V2.500H12V0M1 16V13.500H12V16M1 5H12V11H1ZM15.500 0V3M15.500 8V16" stroke="#fff" strokeWidth="1.200" /><rect x="14" y="4" width="3" height="3" fill="#fff" /></I></TaskIcon>
      <TaskIcon w="w-[54px]" line><I c="w-[24px] h-[24px]" vb="0 0 24 24"><circle cx="12" cy="12" r="12" fill="#dfb51e" /><path d="M12 12L1.600 6A12 12 0 0 1 22.400 6Z" fill="#dc4535" /><path d="M12 12L22.400 6A12 12 0 0 1 12 24Z" fill="#f5c51d" /><path d="M1.600 6A12 12 0 0 0 12 24L17 14L12 12L7 14Z" fill="#2da24c" /><circle cx="12" cy="12" r="5.700" fill="#fff" /><circle cx="12" cy="12" r="4.500" fill="#3b78e0" /></I></TaskIcon>
      <TaskIcon w="w-[44px]"><I c="w-[22px] h-[19px]" vb="0 0 22 20"><path d="M0 1H8L10 3H22V20H0Z" fill="#e5a823" /><path d="M0 5H22V20H0Z" fill="#fcd462" /><path d="M4 20V12H18V20H15V16H7V20Z" fill="#4a9bd0" /></I></TaskIcon>
      <TaskIcon w="w-[54px]"><I c="w-[23px] h-[24px]" vb="0 0 23 24"><path d="M7 6V3Q7 1 9 1H14Q16 1 16 3V6" stroke="#2fa8e0" strokeWidth="1.800" /><path d="M0 5H23V21Q23 24 20 24H3Q0 24 0 21Z" fill="#f4f4f4" /><path d="M6 9h5v5H6z" fill="#e8512f" /><path d="M12 9h5v5h-5z" fill="#7eb42c" /><path d="M6 15h5v5H6z" fill="#2c9be0" /><path d="M12 15h5v5h-5z" fill="#f2b21c" /></I></TaskIcon>
      <TaskIcon w="w-[46px]"><I c="w-[25px] h-[22px]" vb="0 0 25 22"><path d="M0 7L12.500 0L25 7V22H0Z" fill="#1568b8" /><path d="M3 5H22V14H3Z" fill="#eef6fc" /><path d="M0 7L12.500 15L0 22ZM25 7L12.500 15L25 22Z" fill="#2a98e0" /><path d="M0 22L12.500 13L25 22Z" fill="#36b0f0" /></I></TaskIcon>
      <TaskIcon w="w-[50px]"><I c="w-[21px] h-[23px]" vb="0 0 21 23"><path d="M10 0L0 6V16L7 20L7 8L14 4Z" fill="#3f8ee8" /><path d="M11 0L21 6V16L14 12V7Z" fill="#8a5fe0" /><path d="M21 15L10 23L2 18L9 17L15 12Z" fill="#c27ad8" /></I></TaskIcon>
      <TaskIcon w="w-[48px]" on line><MayaLogo c="w-[22px] h-[24px]" /></TaskIcon>
      <TaskIcon w="w-[50px]" line><I c="w-[26px] h-[25px]" vb="0 0 26 25"><circle cx="21" cy="6" r="3" fill="#5b62c8" /><circle cx="14" cy="4.500" r="4" fill="#7b83eb" /><path d="M8 9H25V17Q25 21 20 21H8Z" fill="#5b62c8" /><rect x="0" y="7" width="13" height="13" fill="#464eb8" /><path d="M3.500 10.500H9.500M6.500 10.500V17" stroke="#fff" strokeWidth="1.600" /><circle cx="20" cy="19.500" r="5.500" fill="#7cb83b" stroke="#fff" strokeWidth=".7" /><path d="M17.500 19.500L19.500 21.500L23 17.500" stroke="#fff" strokeWidth="1.300" /></I></TaskIcon>
      <div className="flex-1" />
      <I c="w-[24px] h-[16px]" vb="0 0 24 16"><path d="M6 16A5.500 5.500 0 0 1 5 6A7 7 0 0 1 18 6A5 5 0 0 1 19 16Z" fill="#a9c8f4" /><path d="M6 16A5.500 5.500 0 0 1 5 6A6 6 0 0 1 10 2Q8 12 22 15L19 16Z" fill="#d4e4fb" /></I>
      <span className="ml-[8px] w-[105px] text-[14px] tracking-[-0.2px]"><span className="mr-[9px]">33°F</span>Cloudy</span>
      <I c="w-[12px] h-[8px]" vb="0 0 12 8"><path d="M1 7L6 2L11 7" stroke="#fff" strokeWidth="1.300" /></I>
      <I c="w-[13px] h-[16px] ml-[12px]" vb="0 0 13 16"><rect x="1" y="4" width="8" height="9" rx="1" stroke="#fff" strokeWidth="1.200" /><path d="M9 7L12 5.500V11.500L9 10M3 1.500H7M3 15.500H7" stroke="#fff" strokeWidth="1.200" /><circle cx="5" cy="8.500" r="1.500" fill="#fff" /></I>
      <I c="w-[17px] h-[14px] ml-[8px]" vb="0 0 17 14"><path d="M1 5H4L7.500 1.500V12.500L4 9H1Z" stroke="#fff" strokeWidth="1.200" /><path d="M10 5Q11 7 10 9M12 3Q14 7 12 11M14.500 1.500Q17 7 14.500 12.500" stroke="#fff" strokeWidth="1.100" /></I>
      <I c="w-[18px] h-[14px] ml-[7px]" vb="0 0 18 14"><path d="M4 13A4 4 0 0 1 4 6A5 5 0 0 1 13 5A4 4 0 0 1 14 13Z" fill="#9b9b9b" /><path d="M2 0L16 14" stroke="#eee" strokeWidth="1.500" /></I>
      <I c="w-[17px] h-[15px] ml-[7px]" vb="0 0 17 15"><rect x="4" y="2" width="12" height="8" stroke="#fff" strokeWidth="1.200" /><path d="M7 13.500H13M10 10V13M1 1H5V5H1ZM3 5V11" stroke="#fff" strokeWidth="1.200" /></I>
      <span className="ml-[9px] w-[28px]">ENG</span>
      <div className="w-[68px] text-center leading-[18px]">7:13 PM<br />2/7/2024</div>
      <div className="w-[51px] pl-[9px]">
        <I c="w-[27px] h-[26px]" vb="0 0 27 26"><path d="M0 2H17V16H6L2 20V16H0Z" fill="#fff" /><path d="M3 6H14M3 9H14M3 12H10" stroke="#444" /><circle cx="17" cy="17" r="7.800" fill="#3d3d3d" stroke="#aaa" strokeWidth=".8" /><text x="17" y="21" textAnchor="middle" fontSize="11" fill="#fff">3</text></I>
      </div>
    </div>
  );
}

export default function App() {
  return (
    <div className="w-[1920px] h-[1057px] flex flex-col overflow-hidden bg-[#444444] font-['Open_Sans','Noto_Sans',sans-serif] text-[12px] leading-[16px] tracking-[-0.3px] whitespace-nowrap">
      <MenuBar />
      <StatusLine />
      <Shelf />
      <div className="h-[4px] shrink-0 flex items-end"><div className="h-[2px] w-full bg-[#393939]" /></div>
      <div className="h-[764px] shrink-0 flex">
        <ToolBox />
        <div className="w-[3px] bg-[#393939] shrink-0" />
        <Outliner />
        <div className="w-[2px] bg-[#393939] shrink-0" />
        <Viewports />
        <UVEditor />
        <UVToolkit />
        <ChannelBox />
        <SideTabs />
      </div>
      <TimeSlider />
      <RangeSlider />
      <CommandLine />
      <Taskbar />
    </div>
  );
}
